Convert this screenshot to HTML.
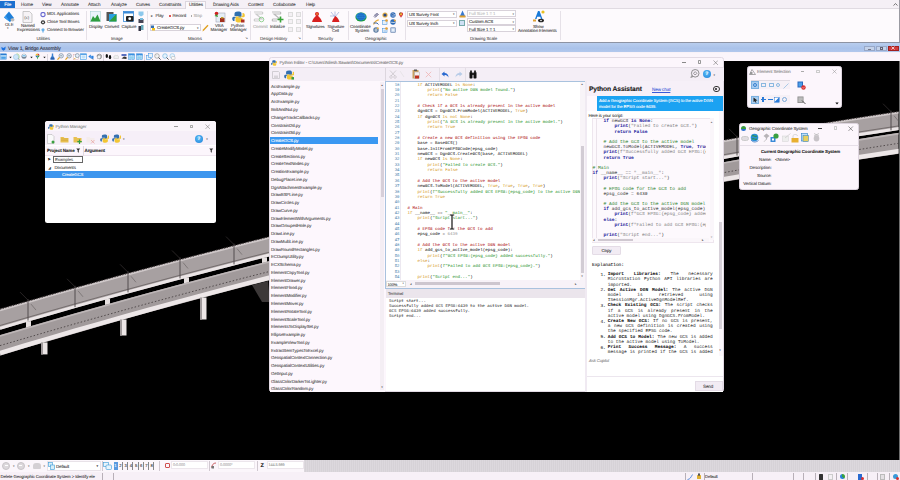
<!DOCTYPE html>
<html><head><meta charset="utf-8">
<style>
*{box-sizing:border-box;margin:0;padding:0}
html,body{width:900px;height:480px;overflow:hidden;background:#f8f2f8}
body{position:relative;font-family:"Liberation Sans",sans-serif;color:#222;text-rendering:geometricPrecision}
.a{position:absolute}
.t{position:absolute;white-space:nowrap;line-height:1;letter-spacing:-0.1px;-webkit-text-stroke:0.08px currentColor}
.m{-webkit-text-stroke:0.04px currentColor;letter-spacing:0}
.m{font-family:"Liberation Mono",monospace}
</style></head><body>

<div class="a" style="left:0px;top:0px;width:900px;height:8.5px;background:#f5f0f6;"></div>
<div class="a" style="left:0px;top:8.3px;width:900px;height:0.5px;background:#e0dbe2;"></div>
<div class="a" style="left:0px;top:1px;width:15px;height:7.3px;background:#1b6fcf;"></div>
<div class="t" style="left:4.2px;top:3.10px;font-size:4.6px;height:4.6px;color:#fff;font-weight:normal;">File</div>
<div class="a" style="left:185px;top:0.8px;width:21px;height:8px;background:#fcf9fc;border:0.5px solid #dcd6de;border-bottom:none"></div>
<div class="t" style="left:21px;top:3.20px;font-size:4.6px;height:4.6px;color:#3a3a3a;font-weight:normal;">Home</div>
<div class="t" style="left:42px;top:3.20px;font-size:4.6px;height:4.6px;color:#3a3a3a;font-weight:normal;">View</div>
<div class="t" style="left:61px;top:3.20px;font-size:4.6px;height:4.6px;color:#3a3a3a;font-weight:normal;">Annotate</div>
<div class="t" style="left:88px;top:3.20px;font-size:4.6px;height:4.6px;color:#3a3a3a;font-weight:normal;">Attach</div>
<div class="t" style="left:111px;top:3.20px;font-size:4.6px;height:4.6px;color:#3a3a3a;font-weight:normal;">Analyze</div>
<div class="t" style="left:136px;top:3.20px;font-size:4.6px;height:4.6px;color:#3a3a3a;font-weight:normal;">Curves</div>
<div class="t" style="left:159px;top:3.20px;font-size:4.6px;height:4.6px;color:#3a3a3a;font-weight:normal;">Constraints</div>
<div class="t" style="left:189px;top:3.20px;font-size:4.6px;height:4.6px;color:#3a3a3a;font-weight:normal;">Utilities</div>
<div class="t" style="left:213px;top:3.20px;font-size:4.6px;height:4.6px;color:#3a3a3a;font-weight:normal;">Drawing Aids</div>
<div class="t" style="left:248px;top:3.20px;font-size:4.6px;height:4.6px;color:#3a3a3a;font-weight:normal;">Content</div>
<div class="t" style="left:273px;top:3.20px;font-size:4.6px;height:4.6px;color:#3a3a3a;font-weight:normal;">Collaborate</div>
<div class="t" style="left:306px;top:3.20px;font-size:4.6px;height:4.6px;color:#3a3a3a;font-weight:normal;">Help</div>
<svg class="a" style="left:893px;top:3px" width="5" height="3" viewBox="0 0 5 3"><path d="M0.5,2.5 L2.5,0.6 4.5,2.5" fill="none" stroke="#555" stroke-width="0.8"/></svg>
<div class="a" style="left:0px;top:8.8px;width:900px;height:32.8px;background:#fdfafd;"></div>
<div class="a" style="left:0px;top:41.5px;width:900px;height:1.1px;background:#8d93a3;"></div>
<div class="a" style="left:898.8px;top:0px;width:1.2px;height:41.5px;background:#9a9aa2;"></div>
<div class="a" style="left:86px;top:11px;width:0.6px;height:29px;background:#e6e1e8;"></div>
<div class="a" style="left:147px;top:11px;width:0.6px;height:29px;background:#e6e1e8;"></div>
<div class="a" style="left:250px;top:11px;width:0.6px;height:29px;background:#e6e1e8;"></div>
<div class="a" style="left:302px;top:11px;width:0.6px;height:29px;background:#e6e1e8;"></div>
<div class="a" style="left:347.5px;top:11px;width:0.6px;height:29px;background:#e6e1e8;"></div>
<div class="a" style="left:404.5px;top:11px;width:0.6px;height:29px;background:#e6e1e8;"></div>
<div class="t" style="left:36.5px;top:36.80px;font-size:4.4px;height:4.4px;color:#555;font-weight:normal;">Utilities</div>
<div class="t" style="left:111px;top:36.80px;font-size:4.4px;height:4.4px;color:#555;font-weight:normal;">Image</div>
<div class="t" style="left:188px;top:36.80px;font-size:4.4px;height:4.4px;color:#555;font-weight:normal;">Macros</div>
<div class="t" style="left:260px;top:36.80px;font-size:4.4px;height:4.4px;color:#555;font-weight:normal;">Design History</div>
<div class="t" style="left:318px;top:36.80px;font-size:4.4px;height:4.4px;color:#555;font-weight:normal;">Security</div>
<div class="t" style="left:365px;top:36.80px;font-size:4.4px;height:4.4px;color:#555;font-weight:normal;">Geographic</div>
<div class="t" style="left:470px;top:36.80px;font-size:4.4px;height:4.4px;color:#555;font-weight:normal;">Drawing Scale</div>
<div class="t" style="left:245px;top:37.15px;font-size:3.5px;height:3.5px;color:#777;font-weight:normal;">↘</div>
<div class="t" style="left:298px;top:37.15px;font-size:3.5px;height:3.5px;color:#777;font-weight:normal;">↘</div>
<svg class="a" style="left:3px;top:10.5px" width="12" height="12" viewBox="0 0 12 12"><polygon points="6,0.5 11,7 7,11 1,6.5" fill="#1f7fd8"/><polygon points="6,0.5 3,5 7,11 1,6.5" fill="#3d9df0"/><ellipse cx="9.5" cy="8.8" rx="2" ry="1.6" fill="#bbb"/></svg>
<div class="t" style="left:5px;top:23.00px;font-size:4.4px;height:4.4px;color:#444;font-weight:normal;">OLE</div>
<div class="t" style="left:7px;top:27.00px;font-size:3px;height:3px;color:#555;font-weight:normal;">▾</div>
<svg class="a" style="left:22px;top:10.5px" width="11" height="12" viewBox="0 0 11 12"><path d="M1,0.5 H7.5 L10,3 V11.5 H1 Z" fill="#f6f3f6" stroke="#aaa" stroke-width="0.6"/><text x="2.2" y="8" font-size="4.2" fill="#555" font-family="Liberation Sans">(x)</text></svg>
<div class="t" style="left:21px;top:24.30px;font-size:4.4px;height:4.4px;color:#444;font-weight:normal;">Named</div>
<div class="t" style="left:17px;top:28.30px;font-size:4.4px;height:4.4px;color:#444;font-weight:normal;">Expressions</div>
<svg class="a" style="left:40px;top:11.5px" width="6" height="21" viewBox="0 0 6 21"><circle cx="3" cy="2.5" r="2.1" fill="none" stroke="#6a6ad0" stroke-width="1.1"/><circle cx="3" cy="10.3" r="2.1" fill="#333"/><circle cx="3" cy="10.3" r="0.9" fill="#fff"/><circle cx="3" cy="17.8" r="1.6" fill="#6ab0e8"/><rect x="2.5" y="18.5" width="1" height="2.2" fill="#6ab0e8"/></svg>
<div class="t" style="left:47px;top:12.40px;font-size:4.4px;height:4.4px;color:#444;font-weight:normal;">MDL Applications</div>
<div class="t" style="left:47px;top:19.90px;font-size:4.4px;height:4.4px;color:#444;font-weight:normal;">Close Tool Boxes</div>
<div class="t" style="left:47px;top:27.70px;font-size:4.4px;height:4.4px;color:#444;font-weight:normal;">Connect to Browser</div>
<svg class="a" style="left:90px;top:11px" width="11" height="11" viewBox="0 0 11 11"><rect x="0.5" y="0.5" width="10" height="10" fill="#eaf4fb" stroke="#9cc" stroke-width="0.5"/><path d="M0.5,10.5 L3,5 5,7.5 7.5,3.5 10.5,10.5Z" fill="#2e9e3e"/></svg>
<div class="t" style="left:89px;top:24.80px;font-size:4.4px;height:4.4px;color:#444;font-weight:normal;">Display</div>
<svg class="a" style="left:106px;top:11px" width="11" height="11" viewBox="0 0 11 11"><rect x="0.5" y="1" width="7" height="9" fill="#555"/><rect x="3" y="3" width="7.5" height="7.5" fill="#2aa0e0"/><path d="M3,10.5 L10.5,3 V10.5Z" fill="#2e9e3e"/></svg>
<div class="t" style="left:104.5px;top:24.80px;font-size:4.4px;height:4.4px;color:#444;font-weight:normal;">Convert</div>
<svg class="a" style="left:123px;top:11px" width="11" height="11" viewBox="0 0 11 11"><rect x="0.5" y="0.5" width="10" height="10" fill="#fff" stroke="#3a8ad8" stroke-width="0.8"/><rect x="0.5" y="0.5" width="10" height="2" fill="#3a8ad8"/><rect x="3" y="5" width="7.5" height="5.5" rx="1" fill="#222"/><circle cx="6.7" cy="7.7" r="1.4" fill="#fff"/></svg>
<div class="t" style="left:121.5px;top:24.80px;font-size:4.4px;height:4.4px;color:#444;font-weight:normal;">Capture</div>
<svg class="a" style="left:138px;top:11px" width="6" height="21" viewBox="0 0 6 21"><path d="M0.5,0.5 H5.5 V4 L3,5.5 0.5,4Z" fill="#8cc8ec"/><rect x="0.5" y="8" width="5" height="4" fill="#445"/><rect x="2" y="7" width="3" height="2" fill="#7bd"/><rect x="0.5" y="15" width="2.5" height="5" fill="#334"/><rect x="3" y="14" width="2.5" height="5" fill="#6ab"/></svg>
<div class="t" style="left:151px;top:14.95px;font-size:3.5px;height:3.5px;color:#444;font-weight:normal;">▸</div>
<div class="t" style="left:155.5px;top:14.40px;font-size:4.4px;height:4.4px;color:#444;font-weight:normal;">Play</div>
<div class="a" style="left:168.5px;top:14.8px;width:2.2px;height:2.2px;border-radius:50%;background:#d02020"></div>
<div class="t" style="left:172.5px;top:14.40px;font-size:4.4px;height:4.4px;color:#444;font-weight:normal;">Record</div>
<div class="a" style="left:190.5px;top:15px;width:1.8px;height:1.8px;background:#aaa;"></div>
<div class="t" style="left:193.5px;top:14.40px;font-size:4.4px;height:4.4px;color:#aaa;font-weight:normal;">Stop</div>
<div class="a" style="left:149.5px;top:24.2px;width:51px;height:7.3px;background:#fff;border:0.5px solid #d8d2da"></div>
<svg class="a" style="left:150px;top:25px" width="6" height="6" viewBox="0 0 6 6"><path d="M1,0.5 h3 v2.5 h-3z" fill="#3470b0"/><path d="M2,3 h3 v2.5 h-3z" fill="#f0c020"/></svg>
<div class="t" style="left:157px;top:26.40px;font-size:4.4px;height:4.4px;color:#333;font-weight:normal;">CreateGCS.py</div>
<div class="t" style="left:197px;top:27.00px;font-size:3px;height:3px;color:#444;font-weight:normal;">▾</div>
<svg class="a" style="left:202px;top:23.5px" width="7" height="8" viewBox="0 0 7 8"><path d="M0.5,7.5 L1,5.5 5.5,0.8 6.5,1.8 2,6.5Z" fill="#e0a020"/></svg>
<svg class="a" style="left:214px;top:10.5px" width="12" height="12" viewBox="0 0 12 12"><rect x="2" y="2" width="9" height="9" fill="#e6eef6" stroke="#99a" stroke-width="0.5"/><circle cx="2.5" cy="2.5" r="1.8" fill="#d02020"/><path d="M0.5,5 L3,3 4,6Z" fill="#3a9a30"/><rect x="6" y="7" width="4.5" height="4" fill="#a03020"/><rect x="7" y="6" width="2.5" height="1.5" fill="#c0a030"/></svg>
<div class="t" style="left:215px;top:24.30px;font-size:4.4px;height:4.4px;color:#444;font-weight:normal;">VBA</div>
<div class="t" style="left:210.5px;top:28.30px;font-size:4.4px;height:4.4px;color:#444;font-weight:normal;">Manager</div>
<svg class="a" style="left:232px;top:11px" width="13" height="12" viewBox="0 0 13 12"><path d="M6,0.5 C3,0.5 2.5,1.5 2.5,3 V5 H6.5 V5.7 H1.5 C0,5.7 0,8 0.5,9 1,10 1.5,10 2.5,10 V8 C2.5,7 3.5,6.5 4.5,6.5 H8 C9,6.5 9.5,6 9.5,5 V2.5 C9.5,1 8,0.5 6,0.5Z" fill="#2f6fb0"/><path d="M7,11.5 C10,11.5 10.5,10.5 10.5,9 V7 H6.5 V6.3 H11.5 C13,6.3 13,4 12.5,3 12,2 11.5,2 10.5,2 V4 C10.5,5 9.5,5.5 8.5,5.5 H5 C4,5.5 3.5,6 3.5,7 V9.5 C3.5,11 5,11.5 7,11.5Z" fill="#f2c634"/><rect x="9" y="8.5" width="3.5" height="3" fill="#b03020"/></svg>
<div class="t" style="left:231px;top:24.30px;font-size:4.4px;height:4.4px;color:#444;font-weight:normal;">Python</div>
<div class="t" style="left:230px;top:28.30px;font-size:4.4px;height:4.4px;color:#444;font-weight:normal;">Manager</div>
<svg class="a" style="left:253px;top:11px" width="12" height="12" viewBox="0 0 12 12"><path d="M1,1 H9 C10,1 10,3 9,3 H3 L9,8 H2 C1,8 1,10 2,10 H6" fill="none" stroke="#ccc" stroke-width="1.2"/><circle cx="8.5" cy="8.5" r="2.3" fill="none" stroke="#8c8" stroke-width="0.9"/></svg>
<div class="t" style="left:253px;top:24.80px;font-size:4.4px;height:4.4px;color:#aaa;font-weight:normal;">Commit</div>
<svg class="a" style="left:271px;top:11px" width="13" height="12" viewBox="0 0 13 12"><path d="M1,1 H9 C10,1 10,3 9,3 H3 L9,8 H2 C1,8 1,10 2,10 H6" fill="none" stroke="#bbb" stroke-width="1.2"/><path d="M9.5,5.5 V11.5 M6.5,8.5 H12.5" stroke="#3aa43a" stroke-width="1.6"/></svg>
<div class="t" style="left:270px;top:24.80px;font-size:4.4px;height:4.4px;color:#444;font-weight:normal;">Initialize</div>
<div class="a" style="left:287.5px;top:11.5px;width:5px;height:5px;background:#f4f0f4;border:0.5px solid #ddd"></div>
<div class="a" style="left:295.5px;top:11.5px;width:5px;height:5px;background:#f4f0f4;border:0.5px solid #ddd"></div>
<div class="a" style="left:287.5px;top:19px;width:5px;height:5px;background:#f4f0f4;border:0.5px solid #ddd"></div>
<div class="a" style="left:295.5px;top:19px;width:5px;height:5px;background:#f4f0f4;border:0.5px solid #ddd"></div>
<div class="a" style="left:287.5px;top:26.5px;width:5px;height:5px;background:#f4f0f4;border:0.5px solid #ddd"></div>
<div class="a" style="left:295.5px;top:26.5px;width:5px;height:5px;background:#f4f0f4;border:0.5px solid #ddd"></div>
<svg class="a" style="left:311px;top:10.5px" width="12" height="12" viewBox="0 0 12 12"><circle cx="6" cy="3" r="2" fill="#d82020"/><path d="M6,4 C3,6 1.5,9 1,11 H11 C10.5,9 9,6 6,4Z" fill="#d82020"/><circle cx="6" cy="3" r="0.8" fill="#f4c030"/></svg>
<div class="t" style="left:306px;top:24.95px;font-size:4.1px;height:4.1px;color:#444;font-weight:normal;">Signatures</div>
<svg class="a" style="left:329px;top:10.5px" width="11" height="12" viewBox="0 0 11 12"><path d="M2,1 L6,6 M6,0.5 V6 M10,1 L6,6 M1,5 H6" stroke="#9ad" stroke-width="0.7"/><path d="M6.5,5 C4.5,7 3.5,9 3,11 H10.5 C10,9 9,7 6.5,5Z" fill="#d82020"/></svg>
<div class="t" style="left:327.5px;top:24.95px;font-size:4.1px;height:4.1px;color:#444;font-weight:normal;">Signature</div>
<div class="t" style="left:332px;top:28.60px;font-size:4.2px;height:4.2px;color:#444;font-weight:normal;">Cell</div>
<svg class="a" style="left:355px;top:11.5px" width="12" height="10" viewBox="0 0 12 10"><ellipse cx="6" cy="5" rx="5.6" ry="4.6" fill="#1a9e3a"/><ellipse cx="6" cy="4.6" rx="5" ry="3.8" fill="#2a8ae0"/><path d="M1.5,4.6 H10.5 M6,1 V8.5 M2.2,2.8 H9.8 M2.2,6.5 H9.8" stroke="#1a60b0" stroke-width="0.5"/><ellipse cx="6" cy="4.6" rx="2.3" ry="3.8" fill="none" stroke="#1a60b0" stroke-width="0.5"/></svg>
<div class="t" style="left:350px;top:24.80px;font-size:4.4px;height:4.4px;color:#444;font-weight:normal;">Coordinate</div>
<div class="t" style="left:355px;top:28.50px;font-size:4.4px;height:4.4px;color:#444;font-weight:normal;">System</div>
<svg class="a" style="left:373px;top:11.5px" width="6" height="6" viewBox="0 0 6 6"><path d="M1,4.5 L4.5,1 M2,5.5 L5.5,2" stroke="#3a3a6a" stroke-width="1"/><path d="M1.5,3 L3,1.5" stroke="#88a" stroke-width="0.6"/></svg>
<svg class="a" style="left:381.5px;top:11.5px" width="6" height="6" viewBox="0 0 6 6"><circle cx="3" cy="3" r="2.6" fill="#e8b040"/><circle cx="3" cy="3" r="1.6" fill="#2a4a8a"/></svg>
<svg class="a" style="left:389.5px;top:11.5px" width="6" height="6" viewBox="0 0 6 6"><circle cx="3" cy="3" r="2.7" fill="#2a6ab8"/><path d="M1.5,2 C3,1 4,3 5.5,2.5 M1.5,4 H5" stroke="#dde" stroke-width="0.7"/></svg>
<svg class="a" style="left:397.5px;top:11.5px" width="6" height="6" viewBox="0 0 6 6"><path d="M3,5.8 L1,2.8 C0.5,1 2,0.3 3,0.3 4,0.3 5.5,1 5,2.8Z" fill="#d84040"/><circle cx="3" cy="2.3" r="1" fill="#f0c030"/><path d="M1,2 L3,0.5" stroke="#3a9a40" stroke-width="0.6"/></svg>
<svg class="a" style="left:373px;top:19px" width="6" height="6" viewBox="0 0 6 6"><path d="M0.5,5.5 C2,2 4,1 5.8,0.8" stroke="#e8b040" stroke-width="1.2" fill="none"/><path d="M0.5,4 L4,4 5.5,5.5" stroke="#2a5aa0" stroke-width="0.9" fill="none"/></svg>
<svg class="a" style="left:381.5px;top:19px" width="6" height="6" viewBox="0 0 6 6"><rect x="0.5" y="1.5" width="4.5" height="4.2" fill="#e4f0fa" stroke="#3a8ad8" stroke-width="0.5"/><circle cx="4.5" cy="1.5" r="1.3" fill="#e8a030"/></svg>
<svg class="a" style="left:389.5px;top:19px" width="6" height="6" viewBox="0 0 6 6"><circle cx="3" cy="3" r="2.7" fill="#2a6ab8"/><path d="M0.8,3.5 C2,2.5 4,4.5 5.5,3" stroke="#f0f0f0" stroke-width="0.8" fill="none"/><circle cx="4.8" cy="1.5" r="1" fill="#e8a030"/></svg>
<svg class="a" style="left:373px;top:26.5px" width="6" height="6" viewBox="0 0 6 6"><circle cx="3" cy="3" r="2.7" fill="#5a7aa0"/><circle cx="3" cy="3" r="1.6" fill="#dfe8f0"/><path d="M1,3 H5" stroke="#3a5a80" stroke-width="0.6"/><circle cx="4.8" cy="1.2" r="1" fill="#e8b040"/></svg>
<svg class="a" style="left:381.5px;top:26.5px" width="6" height="6" viewBox="0 0 6 6"><rect x="0.5" y="1.5" width="4.5" height="4.2" fill="#e4f0fa" stroke="#3a8ad8" stroke-width="0.5"/><circle cx="4.5" cy="1.5" r="1.3" fill="#e8a030"/><path d="M1.5,4 H4" stroke="#3a8ad8" stroke-width="0.5"/></svg>
<svg class="a" style="left:389.5px;top:26.5px" width="6" height="6" viewBox="0 0 6 6"><rect x="0.8" y="0.8" width="4.6" height="4.6" fill="#b8cce8" stroke="#4a6a98" stroke-width="0.5"/><rect x="1.8" y="1.8" width="2.6" height="2.6" fill="#e8f0f8"/></svg>
<div class="a" style="left:407px;top:10.5px;width:49.5px;height:7px;background:#fff;border:0.5px solid #d8d2da"></div>
<div class="t" style="left:409px;top:12.60px;font-size:4.4px;height:4.4px;color:#333;font-weight:normal;">US Survey Foot</div>
<div class="t" style="left:453px;top:13.20px;font-size:3px;height:3px;color:#555;font-weight:normal;">▾</div>
<div class="a" style="left:407px;top:19.5px;width:49.5px;height:7px;background:#fff;border:0.5px solid #d8d2da"></div>
<div class="t" style="left:409px;top:21.60px;font-size:4.4px;height:4.4px;color:#333;font-weight:normal;">US Survey Inch</div>
<div class="t" style="left:453px;top:22.20px;font-size:3px;height:3px;color:#555;font-weight:normal;">▾</div>
<svg class="a" style="left:458.5px;top:10px" width="7" height="8" viewBox="0 0 7 8"><path d="M3.5,0.5 L6.5,7 H0.5Z" fill="#3a7ad0"/><rect x="0.5" y="5.5" width="6" height="2" fill="#e0a030"/></svg>
<div class="a" style="left:458.5px;top:19.5px;width:6.5px;height:6.5px;background:#cfe0f4;border:0.5px solid #7aa"></div>
<div class="a" style="left:466.5px;top:10px;width:49px;height:7.2px;background:#fff;border:0.5px solid #d8d2da"></div>
<div class="t" style="left:469px;top:12.20px;font-size:4.4px;height:4.4px;color:#bbb;font-weight:normal;">Full Size 1 = 1</div>
<div class="t" style="left:512.5px;top:12.80px;font-size:3px;height:3px;color:#666;font-weight:normal;">▾</div>
<div class="a" style="left:466.5px;top:17.7px;width:49px;height:7.2px;background:#fff;border:0.5px solid #d8d2da"></div>
<div class="t" style="left:469px;top:19.90px;font-size:4.4px;height:4.4px;color:#333;font-weight:normal;">Custom ACS</div>
<div class="t" style="left:512.5px;top:20.50px;font-size:3px;height:3px;color:#666;font-weight:normal;">▾</div>
<div class="a" style="left:466.5px;top:25.3px;width:49px;height:7.2px;background:#fff;border:0.5px solid #d8d2da"></div>
<div class="t" style="left:469px;top:27.50px;font-size:4.4px;height:4.4px;color:#333;font-weight:normal;">Full Size 1 = 1</div>
<div class="t" style="left:512.5px;top:28.10px;font-size:3px;height:3px;color:#666;font-weight:normal;">▾</div>
<svg class="a" style="left:532px;top:10px" width="14" height="13" viewBox="0 0 14 13"><path d="M3,9 L6,1 H7.5 L10.5,9 H9 L8.2,6.8 H5.2 L4.5,9Z" fill="#1a7ad8"/><circle cx="11" cy="2" r="1.6" fill="#e8c020"/><ellipse cx="9" cy="10.5" rx="3" ry="1.8" fill="#222"/><circle cx="9" cy="10.5" r="0.8" fill="#fff"/><rect x="1" y="9.5" width="3" height="2" fill="#e0a030"/></svg>
<div class="t" style="left:533px;top:24.80px;font-size:4.4px;height:4.4px;color:#444;font-weight:normal;">Show</div>
<div class="t" style="left:518px;top:28.50px;font-size:4.4px;height:4.4px;color:#444;font-weight:normal;">Annotation Elements</div>
<div class="a" style="left:560px;top:11px;width:0.6px;height:29px;background:#e6e1e8;"></div>
<div class="a" style="left:0;top:42.6px;width:900px;height:9.9px;background:linear-gradient(#b8cdee,#aac2ea 60%,#b2c8ec)"></div>
<svg class="a" style="left:0.5px;top:46px" width="5" height="5" viewBox="0 0 5 5"><path d="M0.3,1 L2.5,2 4.7,0.5 4.2,3.5 2.5,4.7 0.8,3.5Z" fill="#1a70e0"/></svg>
<div class="t" style="left:8px;top:46.50px;font-size:5px;height:5px;color:#2a2a3a;font-weight:normal;">View 1, Bridge Assembly</div>
<div class="a" style="left:864px;top:45.6px;width:10.5px;height:5.2px;background:#c4d2ea;border:0.5px solid #98a8c8"></div>
<div class="a" style="left:876px;top:45.6px;width:10.5px;height:5.2px;background:#c4d2ea;border:0.5px solid #98a8c8"></div>
<div class="a" style="left:888px;top:45.6px;width:10.5px;height:5.2px;background:#d23a3a;border:0.5px solid #a02020"></div>
<div class="a" style="left:867.5px;top:48.6px;width:3.5px;height:0.5px;background:#778;"></div>
<div class="a" style="left:879.7px;top:47.1px;width:3px;height:2.5px;background:none;border:0.5px solid #667"></div>
<svg class="a" style="left:891.2px;top:46.2px" width="4.0" height="4.0" viewBox="0 0 4.0 4.0"><path d="M0.5,0.5 L3.5,3.5 M3.5,0.5 L0.5,3.5" stroke="#fff" stroke-width="0.7"/></svg>
<div class="a" style="left:0px;top:52.5px;width:900px;height:8.5px;background:#fbf5fb;"></div>
<svg class="a" style="left:0px;top:53.3px" width="7" height="7" viewBox="0 0 7 7"><rect x="0.5" y="0.8" width="6" height="5.6" fill="#a8d4f4" stroke="#4a90d8" stroke-width="0.4"/><rect x="0.5" y="0.8" width="6" height="1.2" fill="#2a7ad0"/><rect x="1.3" y="3.8" width="4.4" height="2" fill="#4aa0e8"/></svg>
<svg class="a" style="left:9px;top:55.8px" width="3" height="3" viewBox="0 0 3 3"><path d="M0.3,0.8 H2.7 L1.5,2.3Z" fill="#111"/></svg>
<svg class="a" style="left:30px;top:55.8px" width="3" height="3" viewBox="0 0 3 3"><path d="M0.3,0.8 H2.7 L1.5,2.3Z" fill="#111"/></svg>
<svg class="a" style="left:43px;top:55.8px" width="3" height="3" viewBox="0 0 3 3"><path d="M0.3,0.8 H2.7 L1.5,2.3Z" fill="#111"/></svg>
<svg class="a" style="left:13px;top:53.3px" width="7" height="7" viewBox="0 0 7 7"><circle cx="3" cy="4" r="2.6" fill="#cfe6f8" stroke="#8cc0e8" stroke-width="0.5"/><path d="M3.5,0.8 C6,0.5 6.5,3 6,5.5" stroke="#8ccc60" stroke-width="0.6" fill="none"/><path d="M5.3,5.8 L6.5,6.8" stroke="#222" stroke-width="0.6"/></svg>
<svg class="a" style="left:21px;top:53.3px" width="6" height="7" viewBox="0 0 6 7"><circle cx="3" cy="3.3" r="2.5" fill="#7a8898"/><ellipse cx="3" cy="2.6" rx="2" ry="1.5" fill="#e8f4fc"/><rect x="1.5" y="2.3" width="3" height="1" fill="#5aaee8"/></svg>
<svg class="a" style="left:35px;top:53.3px" width="5" height="7" viewBox="0 0 5 7"><path d="M2.5,0.5 A2,2 0 0 1 4.5,2.5 L2.5,2.5Z" fill="#e03030"/><path d="M4.5,2.5 A2,2 0 0 1 2.5,4.5 L2.5,2.5Z" fill="#30a040"/><path d="M2.5,4.5 A2,2 0 0 1 0.5,2.5 L2.5,2.5Z" fill="#2a70d0"/><path d="M0.5,2.5 A2,2 0 0 1 2.5,0.5 L2.5,2.5Z" fill="#f0c020"/><path d="M1.8,4.3 L2.5,6.5 3.2,4.3Z" fill="#30a040"/></svg>
<div class="a" style="left:46.7px;top:53.5px;width:0.7px;height:7px;background:#dcd6de;"></div>
<svg class="a" style="left:50px;top:53.3px" width="5" height="7" viewBox="0 0 5 7"><path d="M1.8,0.5 H3.2 V2.5 L4.7,6.5 H0.3 L1.8,2.5Z" fill="#3a80d0"/><rect x="0.6" y="4.5" width="3.8" height="2" fill="#2a60b0"/></svg>
<svg class="a" style="left:57px;top:53.3px" width="7" height="7" viewBox="0 0 7 7"><circle cx="4.2" cy="2.8" r="2.2" fill="#e4eef8" stroke="#6a7a90" stroke-width="0.6"/><path d="M2.6,4.4 L0.5,6.6" stroke="#e0a020" stroke-width="1.2"/><path d="M3.2,2.8 H5.2" stroke="#345" stroke-width="0.5"/></svg>
<svg class="a" style="left:65px;top:53.3px" width="7" height="7" viewBox="0 0 7 7"><circle cx="4.2" cy="2.8" r="2.2" fill="#e4eef8" stroke="#6a7a90" stroke-width="0.6"/><path d="M2.6,4.4 L0.5,6.6" stroke="#e0a020" stroke-width="1.2"/><path d="M3.2,2.8 H5.2" stroke="#345" stroke-width="0.5"/></svg>
<svg class="a" style="left:72.5px;top:53.3px" width="7" height="7" viewBox="0 0 7 7"><rect x="0.5" y="1.5" width="5" height="5" fill="#fff" stroke="#d8a0a0" stroke-width="0.4"/><circle cx="4.3" cy="2.6" r="2" fill="#e4eef8" stroke="#6a7a90" stroke-width="0.6"/><path d="M1,6.3 L2.5,4.8" stroke="#e0a020" stroke-width="0.9"/></svg>
<svg class="a" style="left:80px;top:53.3px" width="7" height="7" viewBox="0 0 7 7"><rect x="0.5" y="0.8" width="6" height="5.8" fill="#e8f4fc" stroke="#4aa0e8" stroke-width="0.6"/><rect x="0.5" y="0.8" width="6" height="1" fill="#3a90e0"/><ellipse cx="3.5" cy="4" rx="2" ry="1.4" fill="#bfe0f8"/></svg>
<svg class="a" style="left:88px;top:53.3px" width="6" height="7" viewBox="0 0 6 7"><path d="M0.3,3.5 L2.8,1.5 V5.5Z" fill="#2a80e0"/><rect x="3.2" y="2.8" width="2.3" height="3" fill="#2a80e0"/><path d="M4.5,6 L5.5,6.8" stroke="#222" stroke-width="0.6"/></svg>
<svg class="a" style="left:96px;top:53.3px" width="6" height="7" viewBox="0 0 6 7"><path d="M1,3.5 A2.3,2.3 0 1 1 3,5.8" fill="none" stroke="#666" stroke-width="0.7"/><rect x="1.8" y="2.5" width="2.6" height="3.3" fill="#f0f0f0" stroke="#777" stroke-width="0.4"/></svg>
<div class="a" style="left:103.3px;top:53.5px;width:0.7px;height:7px;background:#dcd6de;"></div>
<svg class="a" style="left:105px;top:53.3px" width="7" height="7" viewBox="0 0 7 7"><ellipse cx="1.8" cy="3" rx="1.2" ry="2.1" fill="#111"/><ellipse cx="5" cy="4.2" rx="1.2" ry="2.1" fill="#111"/></svg>
<svg class="a" style="left:113px;top:53.3px" width="6" height="7" viewBox="0 0 6 7"><path d="M0.8,5.5 C0.3,3 2,1.8 3.5,2.5 C4.5,1.5 6,3 5.5,5.5Z" fill="#eee" stroke="#c8c8c8" stroke-width="0.5"/></svg>
<svg class="a" style="left:121px;top:53.3px" width="6" height="7" viewBox="0 0 6 7"><rect x="0.5" y="1" width="5" height="2" fill="#5a70c0"/><path d="M0.5,5.5 L3,3.5 5.5,4 5.5,6Z" fill="#333"/></svg>
<svg class="a" style="left:128px;top:53.3px" width="7" height="7" viewBox="0 0 7 7"><rect x="0.5" y="0.8" width="6" height="5.8" fill="#cfe8f8" stroke="#3a90e0" stroke-width="0.5"/><rect x="0.5" y="0.8" width="6" height="1.6" fill="#3a90e0"/><path d="M3.5,2.4 V6.6" stroke="#fff" stroke-width="0.5"/><rect x="1.2" y="3.3" width="4.6" height="2.6" fill="#8fd0f0"/></svg>
<svg class="a" style="left:136px;top:53.3px" width="7" height="7" viewBox="0 0 7 7"><rect x="0.5" y="0.8" width="6" height="5.8" fill="#cfe8f8" stroke="#3a90e0" stroke-width="0.5"/><rect x="0.5" y="0.8" width="6" height="1.6" fill="#3a90e0"/><path d="M3.5,2.4 V6.6" stroke="#fff" stroke-width="0.5"/><rect x="1.2" y="3.3" width="4.6" height="2.6" fill="#8fd0f0"/></svg>
<div class="a" style="left:144.3px;top:53.5px;width:0.7px;height:7px;background:#dcd6de;"></div>
<svg class="a" style="left:146px;top:53.3px" width="7" height="7" viewBox="0 0 7 7"><rect x="0.5" y="2.5" width="4" height="4" fill="#e4f2fc" stroke="#3a90e0" stroke-width="0.5"/><rect x="2.5" y="0.6" width="4" height="4" fill="#e4f2fc" stroke="#3a90e0" stroke-width="0.5"/><path d="M5.5,5.5 L6.6,6.6" stroke="#222" stroke-width="0.6"/></svg>
<svg class="a" style="left:154px;top:53.3px" width="7" height="7" viewBox="0 0 7 7"><circle cx="3" cy="3" r="2.3" fill="#f4f4f4" stroke="#888" stroke-width="0.6"/><path d="M4.5,4.5 L6.6,6.6" stroke="#333" stroke-width="0.8"/><path d="M1,1 L2.5,2.5" stroke="#aaa" stroke-width="0.5"/></svg>
<svg class="a" style="left:161.5px;top:53.3px" width="7" height="7" viewBox="0 0 7 7"><circle cx="3" cy="3" r="2.3" fill="#e4f2fc" stroke="#6ab0e0" stroke-width="0.6"/><path d="M4.5,4.5 L6.6,6.6" stroke="#333" stroke-width="0.8"/></svg>
<svg class="a" style="left:169px;top:53.3px" width="7" height="7" viewBox="0 0 7 7"><circle cx="3.3" cy="3" r="2.4" fill="#e8f4fc" stroke="#8cc0e8" stroke-width="0.6"/><rect x="2.5" y="3.5" width="3.5" height="3" rx="0.8" fill="#f8f8f8" stroke="#999" stroke-width="0.4"/></svg>
<div class="a" style="left:0px;top:61px;width:900px;height:398.5px;background:#000;"></div>
<svg class="a" style="left:0;top:0" width="900" height="480" viewBox="0 0 900 480"><defs><clipPath id="vc"><rect x="0" y="61" width="898.5" height="398.5"/></clipPath></defs><g clip-path="url(#vc)"><rect x="26" y="321.1" width="5" height="7.4" fill="#e6e0e0"/><rect x="105" y="298.8" width="5" height="7.1" fill="#e6e0e0"/><rect x="184" y="277.4" width="5" height="6.9" fill="#e6e0e0"/><rect x="262" y="257.3" width="5" height="6.6" fill="#e6e0e0"/><polygon fill="#a7a0a1" points="0,309.1 25,301.9 50,294.8 75,287.8 100,280.9 125,274.1 150,267.4 175,260.8 200,254.3 225,247.9 250,241.5 275,235.3 300,229.2 325,223.2 350,217.2 375,211.4 400,205.7 425,200.0 450,194.5 475,189.0 500,183.7 525,178.4 550,173.3 575,168.2 600,163.3 625,158.4 650,153.7 675,149.0 700,144.4 725,139.9 750,135.6 775,131.3 800,127.1 825,123.0 850,119.0 875,115.1 900,111.3 900,129.9 875,133.7 850,137.6 825,141.6 800,145.7 775,150.0 750,154.3 725,158.7 700,163.2 675,167.8 650,172.5 625,177.3 600,182.2 575,187.2 550,192.3 525,197.5 500,202.8 475,208.2 450,213.7 425,219.3 400,225.0 375,230.8 350,236.7 325,242.7 300,248.8 275,255.0 250,261.3 225,267.7 200,274.2 175,280.8 150,287.5 125,294.3 100,301.1 75,308.1 50,315.2 25,322.4 0,329.7"/><polyline fill="none" stroke="#cfc8c9" stroke-width="1.8" points="0,310.3 25,303.1 50,296.0 75,289.0 100,282.1 125,275.3 150,268.6 175,262.0 200,255.5 225,249.1 250,242.7 275,236.5 300,230.4 325,224.4 350,218.4 375,212.6 400,206.9 425,201.2 450,195.7 475,190.2 500,184.9 525,179.6 550,174.5 575,169.4 600,164.5 625,159.6 650,154.9 675,150.2 700,145.6 725,141.1 750,136.8 775,132.5 800,128.3 825,124.2 850,120.2 875,116.3 900,112.5"/><polyline fill="none" stroke="#3c3536" stroke-width="1.1" stroke-dasharray="1.3 1.4" points="0,309.1 25,301.9 50,294.8 75,287.8 100,280.9 125,274.1 150,267.4 175,260.8 200,254.3 225,247.9 250,241.5 275,235.3 300,229.2 325,223.2 350,217.2 375,211.4 400,205.7 425,200.0 450,194.5 475,189.0 500,183.7 525,178.4 550,173.3 575,168.2 600,163.3 625,158.4 650,153.7 675,149.0 700,144.4 725,139.9 750,135.6 775,131.3 800,127.1 825,123.0 850,119.0 875,115.1 900,111.3"/><polyline fill="none" stroke="#5e5758" stroke-width="0.7" points="0,325.5 25,318.2 50,311.0 75,303.9 100,296.9 125,290.1 150,283.3 175,276.6 200,270.0 225,263.5 250,257.1 275,250.8 300,244.6 325,238.5 350,232.5 375,226.6 400,220.8 425,215.1 450,209.5 475,204.0 500,198.6 525,193.3 550,188.1 575,183.0 600,178.0 625,173.1 650,168.3 675,163.6 700,159.0 725,154.5 750,150.1 775,145.8 800,141.5 825,137.4 850,133.4 875,129.5 900,125.7"/><polyline fill="none" stroke="#ebe5e6" stroke-width="3" points="0,328.2 25,320.9 50,313.7 75,306.6 100,299.6 125,292.8 150,286.0 175,279.3 200,272.7 225,266.2 250,259.8 275,253.5 300,247.3 325,241.2 350,235.2 375,229.3 400,223.5 425,217.8 450,212.2 475,206.7 500,201.3 525,196.0 550,190.8 575,185.7 600,180.7 625,175.8 650,171.0 675,166.3 700,161.7 725,157.2 750,152.8 775,148.5 800,144.2 825,140.1 850,136.1 875,132.2 900,128.4"/><polygon fill="#a19a9b" points="0,335.1 25,327.8 50,320.5 75,313.3 100,306.3 125,299.3 150,292.4 175,285.7 200,279.0 225,272.4 250,265.9 275,259.6 300,253.3 325,247.1 350,241.0 375,235.1 400,229.2 425,223.4 450,217.7 475,212.2 500,206.7 525,201.3 550,196.0 575,190.9 600,185.8 625,180.8 650,175.9 675,171.1 700,166.5 725,161.9 750,157.4 775,153.0 800,148.7 825,144.6 850,140.5 875,136.5 900,132.6 900,153.6 875,157.3 850,161.1 825,165.0 800,169.0 775,173.1 750,177.4 725,181.7 700,186.2 675,190.7 650,195.4 625,200.2 600,205.1 575,210.1 550,215.2 525,220.5 500,225.8 475,231.3 450,236.8 425,242.5 400,248.3 375,254.2 350,260.2 325,266.3 300,272.5 275,278.8 250,285.2 225,291.8 200,298.5 175,305.2 150,312.1 125,319.1 100,326.2 75,333.4 50,340.7 25,348.1 0,355.7"/><polyline fill="none" stroke="#bdb6b7" stroke-width="1.6" points="0,336.0 25,328.7 50,321.4 75,314.2 100,307.2 125,300.2 150,293.3 175,286.6 200,279.9 225,273.3 250,266.8 275,260.5 300,254.2 325,248.0 350,241.9 375,236.0 400,230.1 425,224.3 450,218.6 475,213.1 500,207.6 525,202.2 550,196.9 575,191.8 600,186.7 625,181.7 650,176.8 675,172.0 700,167.4 725,162.8 750,158.3 775,153.9 800,149.6 825,145.5 850,141.4 875,137.4 900,133.5"/><polyline fill="none" stroke="#4a4344" stroke-width="0.9" stroke-dasharray="1.5 2" points="0,345.6 25,338.3 50,331.0 75,323.8 100,316.8 125,309.8 150,302.9 175,296.2 200,289.5 225,282.9 250,276.4 275,270.1 300,263.8 325,257.6 350,251.5 375,245.6 400,239.7 425,233.9 450,228.2 475,222.7 500,217.2 525,211.8 550,206.5 575,201.4 600,196.3 625,191.3 650,186.4 675,181.6 700,177.0 725,172.4 750,167.9 775,163.5 800,159.2 825,155.1 850,151.0 875,147.0 900,143.1"/><polyline fill="none" stroke="#ede7e8" stroke-width="4.6" points="0,353.1 25,345.5 50,338.1 75,330.8 100,323.6 125,316.5 150,309.5 175,302.6 200,295.9 225,289.2 250,282.6 275,276.2 300,269.9 325,263.7 350,257.6 375,251.6 400,245.7 425,239.9 450,234.2 475,228.7 500,223.2 525,217.9 550,212.6 575,207.5 600,202.5 625,197.6 650,192.8 675,188.1 700,183.6 725,179.1 750,174.8 775,170.5 800,166.4 825,162.4 850,158.5 875,154.7 900,151.0"/><rect x="41" y="342.4" width="6.5" height="12" fill="#ece6e6"/><rect x="41" y="342.4" width="2" height="12" fill="#a09a9b"/><rect x="120" y="319.5" width="6.5" height="16" fill="#ece6e6"/><rect x="120" y="319.5" width="2" height="16" fill="#a09a9b"/><rect x="200" y="297.5" width="6.5" height="22" fill="#ece6e6"/><rect x="200" y="297.5" width="2" height="22" fill="#a09a9b"/><polygon fill="#3c3838" points="252,285 268,281 270,302 262,302"/><line x1="28" y1="299.1" x2="28" y2="320.5" stroke="#4a4445" stroke-width="0.9"/><line x1="20" y1="292.1" x2="28" y2="300.1" stroke="#3a3435" stroke-width="0.7"/><line x1="31" y1="304.1" x2="36" y2="310.1" stroke="#6e6869" stroke-width="0.7"/><line x1="75" y1="285.8" x2="75" y2="307.1" stroke="#4a4445" stroke-width="0.9"/><line x1="67" y1="278.8" x2="75" y2="286.8" stroke="#3a3435" stroke-width="0.7"/><line x1="78" y1="290.8" x2="83" y2="296.8" stroke="#6e6869" stroke-width="0.7"/><line x1="128" y1="271.3" x2="128" y2="292.4" stroke="#4a4445" stroke-width="0.9"/><line x1="120" y1="264.3" x2="128" y2="272.3" stroke="#3a3435" stroke-width="0.7"/><line x1="131" y1="276.3" x2="136" y2="282.3" stroke="#6e6869" stroke-width="0.7"/><line x1="180" y1="257.5" x2="180" y2="278.4" stroke="#4a4445" stroke-width="0.9"/><line x1="172" y1="250.5" x2="180" y2="258.5" stroke="#3a3435" stroke-width="0.7"/><line x1="183" y1="262.5" x2="188" y2="268.5" stroke="#6e6869" stroke-width="0.7"/><line x1="234" y1="243.6" x2="234" y2="264.4" stroke="#4a4445" stroke-width="0.9"/><line x1="226" y1="236.6" x2="234" y2="244.6" stroke="#3a3435" stroke-width="0.7"/><line x1="237" y1="248.6" x2="242" y2="254.6" stroke="#6e6869" stroke-width="0.7"/><line x1="737" y1="135.8" x2="737" y2="155.5" stroke="#4a4445" stroke-width="0.9"/><line x1="729" y1="128.8" x2="737" y2="136.8" stroke="#3a3435" stroke-width="0.7"/><line x1="740" y1="140.8" x2="745" y2="146.8" stroke="#6e6869" stroke-width="0.7"/><line x1="891" y1="110.7" x2="891" y2="130.3" stroke="#4a4445" stroke-width="0.9"/><line x1="883" y1="103.7" x2="891" y2="111.7" stroke="#3a3435" stroke-width="0.7"/><line x1="894" y1="115.7" x2="899" y2="121.7" stroke="#6e6869" stroke-width="0.7"/></g></svg>
<div class="a" style="left:898.5px;top:61px;width:1.5px;height:399px;background:#6e6e6e;"></div>
<div class="a" style="left:0px;top:459.5px;width:900px;height:12.5px;background:#d9d5da;"></div>
<div class="a" style="left:0;top:459.5px;width:900px;height:12.5px;background:repeating-linear-gradient(90deg,#dcd8dd 0 1px,#d6d2d7 1px 2px)"></div>
<div class="a" style="left:0px;top:459.5px;width:304px;height:12.5px;background:#fbf6fb;"></div>
<div class="a" style="left:2px;top:461.8px;width:8px;height:8px;border-radius:50%;background:#dcd8dc;border:0.6px solid #c8c4c8"></div>
<div class="a" style="left:4.5px;top:465.4px;width:3px;height:0.8px;background:#fff"></div>
<div class="a" style="left:16.5px;top:461.8px;width:8px;height:8px;border-radius:50%;background:#dcd8dc;border:0.6px solid #c8c4c8"></div>
<div class="a" style="left:19.0px;top:465.4px;width:3px;height:0.8px;background:#fff"></div>
<div class="t" style="left:13px;top:465.00px;font-size:3px;height:3px;color:#666;font-weight:normal;">▾</div>
<div class="t" style="left:28px;top:465.00px;font-size:3px;height:3px;color:#666;font-weight:normal;">▾</div>
<div class="a" style="left:32.5px;top:462.5px;width:8.5px;height:6px;border-radius:3px 3px 1px 1px;background:#d4d0d4"></div>
<div class="t" style="left:43.5px;top:465.00px;font-size:3px;height:3px;color:#666;font-weight:normal;">▾</div>
<div class="a" style="left:47px;top:461px;width:53.5px;height:9.5px;background:#fff;border:0.5px solid #e8e2e8"></div>
<svg class="a" style="left:48px;top:461.8px" width="7" height="8" viewBox="0 0 7 8"><rect x="0.5" y="0.5" width="4" height="4" fill="#d8eef8" stroke="#3a9ad8" stroke-width="0.6"/><rect x="2.5" y="3" width="4" height="4.5" fill="#d8eef8" stroke="#3a9ad8" stroke-width="0.6"/></svg>
<div class="t" style="left:56px;top:464.50px;font-size:4.4px;height:4.4px;color:#333;font-weight:normal;">Default</div>
<div class="t" style="left:96.5px;top:464.90px;font-size:3.2px;height:3.2px;color:#222;font-weight:normal;">▾</div>
<div class="a" style="left:101.5px;top:460.5px;width:0.6px;height:10.5px;background:#d0c8d0;"></div>
<svg class="a" style="left:103px;top:461.5px" width="9" height="8" viewBox="0 0 9 8"><rect x="0.5" y="0.5" width="5" height="4" fill="#e8f4fc" stroke="#3a9ad8" stroke-width="0.6"/><rect x="3" y="3" width="5.5" height="4.5" rx="1" fill="#e8f4fc" stroke="#3a9ad8" stroke-width="0.6"/></svg>
<div class="a" style="left:113.5px;top:461.5px;width:4.5px;height:8px;background:#5a9ae0;"></div>
<div class="t" style="left:114.3px;top:464.30px;font-size:4.2px;height:4.2px;color:#fff;font-weight:normal;">1</div>
<div class="a" style="left:118.5px;top:461.5px;width:4.6px;height:8px;background:#fbf6fb;border-right:0.5px solid #888"></div>
<div class="t" style="left:119.3px;top:464.30px;font-size:4.2px;height:4.2px;color:#333;font-weight:normal;">2</div>
<div class="a" style="left:123.7px;top:461.5px;width:4.6px;height:8px;background:#fbf6fb;border-right:0.5px solid #888"></div>
<div class="t" style="left:124.5px;top:464.30px;font-size:4.2px;height:4.2px;color:#333;font-weight:normal;">3</div>
<div class="a" style="left:128.9px;top:461.5px;width:4.6px;height:8px;background:#fbf6fb;border-right:0.5px solid #888"></div>
<div class="t" style="left:129.7px;top:464.30px;font-size:4.2px;height:4.2px;color:#333;font-weight:normal;">4</div>
<div class="a" style="left:134.1px;top:461.5px;width:4.6px;height:8px;background:#fbf6fb;border-right:0.5px solid #888"></div>
<div class="t" style="left:134.9px;top:464.30px;font-size:4.2px;height:4.2px;color:#333;font-weight:normal;">5</div>
<div class="a" style="left:139.3px;top:461.5px;width:4.6px;height:8px;background:#fbf6fb;border-right:0.5px solid #888"></div>
<div class="t" style="left:140.1px;top:464.30px;font-size:4.2px;height:4.2px;color:#333;font-weight:normal;">6</div>
<div class="a" style="left:144.5px;top:461.5px;width:4.6px;height:8px;background:#fbf6fb;border-right:0.5px solid #888"></div>
<div class="t" style="left:145.3px;top:464.30px;font-size:4.2px;height:4.2px;color:#333;font-weight:normal;">7</div>
<div class="a" style="left:149.7px;top:461.5px;width:4.6px;height:8px;background:#fbf6fb;border-right:0.5px solid #888"></div>
<div class="t" style="left:150.5px;top:464.30px;font-size:4.2px;height:4.2px;color:#333;font-weight:normal;">8</div>
<div class="a" style="left:159px;top:460.5px;width:0.6px;height:10.5px;background:#d0c8d0;"></div>
<div class="a" style="left:165px;top:462.5px;width:5px;height:5px;border:0.7px solid #d05050;border-radius:1px"></div>
<div class="a" style="left:171px;top:461.2px;width:36.5px;height:8.3px;background:#fff;border:0.5px solid #ece6ec"></div>
<div class="t" style="left:173px;top:464.40px;font-size:3.8px;height:3.8px;color:#aaa;font-weight:normal;">0:0.000</div>
<div class="a" style="left:208.5px;top:460.5px;width:0.6px;height:10.5px;background:#d0c8d0;"></div>
<svg class="a" style="left:211px;top:462px" width="6" height="7" viewBox="0 0 6 7"><path d="M1,6 A4,4 0 0 1 5,1" stroke="#c04040" stroke-width="0.8" fill="none"/><rect x="0.5" y="4" width="2.5" height="2.5" fill="#777"/></svg>
<div class="a" style="left:218px;top:461.2px;width:37px;height:8.3px;background:#fff;border:0.5px solid #ece6ec"></div>
<div class="t" style="left:220px;top:464.40px;font-size:3.8px;height:3.8px;color:#aaa;font-weight:normal;">0.0000°</div>
<div class="a" style="left:257px;top:460.5px;width:0.6px;height:10.5px;background:#d0c8d0;"></div>
<div class="t" style="left:260.5px;top:463.75px;font-size:5.5px;height:5.5px;color:#111;font-weight:bold;">Z</div>
<div class="a" style="left:266.5px;top:461.2px;width:37px;height:8.3px;background:#fff;border:0.5px solid #ece6ec"></div>
<div class="t" style="left:268.5px;top:464.40px;font-size:3.8px;height:3.8px;color:#999;font-weight:normal;">144.5.989</div>
<div class="a" style="left:0px;top:472px;width:900px;height:8px;background:#f7f0f7;"></div>
<div class="t" style="left:0.5px;top:475.35px;font-size:4.3px;height:4.3px;color:#333;font-weight:normal;">Delete Geographic Coordinate System &gt; Identify ele</div>
<div class="a" style="left:102px;top:472.8px;width:0.5px;height:7px;background:#b8b0b8;"></div>
<div class="a" style="left:113px;top:472.8px;width:0.5px;height:7px;background:#b8b0b8;"></div>
<div class="a" style="left:684.7px;top:472.8px;width:0.5px;height:7px;background:#b8b0b8;"></div>
<div class="a" style="left:704px;top:472.8px;width:0.5px;height:7px;background:#b8b0b8;"></div>
<div class="a" style="left:752px;top:472.8px;width:0.5px;height:7px;background:#b8b0b8;"></div>
<div class="a" style="left:792.5px;top:472.8px;width:0.5px;height:7px;background:#b8b0b8;"></div>
<div class="a" style="left:803px;top:472.8px;width:0.5px;height:7px;background:#b8b0b8;"></div>
<div class="a" style="left:815px;top:472.8px;width:0.5px;height:7px;background:#b8b0b8;"></div>
<div class="a" style="left:835.5px;top:472.8px;width:0.5px;height:7px;background:#b8b0b8;"></div>
<div class="a" style="left:847px;top:472.8px;width:0.5px;height:7px;background:#b8b0b8;"></div>
<div class="a" style="left:867.2px;top:472.8px;width:0.5px;height:7px;background:#b8b0b8;"></div>
<div class="a" style="left:876.7px;top:472.8px;width:0.5px;height:7px;background:#b8b0b8;"></div>
<div class="a" style="left:889px;top:472.8px;width:0.5px;height:7px;background:#b8b0b8;"></div>
<svg class="a" style="left:687px;top:473.5px" width="6" height="6" viewBox="0 0 6 6"><path d="M0.5,5.5 C3,5.5 4,3 5.5,0.5" stroke="#3a7ad8" stroke-width="0.8" fill="none"/></svg>
<div class="a" style="left:697px;top:475px;width:4px;height:3.5px;background:#e0b030;border-radius:0.5px"></div>
<div class="a" style="left:697.8px;top:473.3px;width:2.5px;height:2.5px;border:0.5px solid #555;border-radius:1px 1px 0 0"></div>
<div class="t" style="left:705px;top:475.20px;font-size:4.2px;height:4.2px;color:#333;font-weight:normal;">Default</div>
<div class="a" style="left:818.5px;top:473.5px;width:4.5px;height:6px;background:#333;border-radius:0.5px"></div>
<div class="a" style="left:827.5px;top:473.5px;width:5px;height:6px;background:#f4f0f4;border:0.5px solid #ccc"></div>
<div class="a" style="left:839.5px;top:473.5px;width:5.5px;height:5.5px;border-radius:50%;background:conic-gradient(#3aa040 0 40%,#2a80d8 0)"></div>
<div class="a" style="left:858px;top:473.5px;width:4px;height:6px;background:#2a6ad0;"></div>
<div class="a" style="left:861px;top:476.5px;width:3px;height:3px;border-radius:50%;background:#d83030"></div>
<div class="a" style="left:880px;top:473.5px;width:5px;height:6px;background:#e4e0e4;border:0.5px solid #bbb"></div>
<div class="a" style="left:892.5px;top:473.5px;width:5px;height:5px;border-radius:50%;background:#3a9ad8"></div>
<div class="a" style="left:895.5px;top:476.5px;width:3px;height:3px;border-radius:50%;background:#d83030"></div>
<div class="a" style="left:45px;top:121.3px;width:170.5px;height:102.2px;background:#fff;border-radius:2.5px;overflow:hidden"></div>
<div class="a" style="left:45px;top:121.3px;width:170.5px;height:10px;background:#faf5fa;border-radius:2.5px 2.5px 0 0"></div>
<svg class="a" style="left:48px;top:123.5px" width="6" height="6" viewBox="0 0 12 12"><path d="M6,0.5 C3,0.5 2.5,1.5 2.5,3 V5 H6.5 V5.7 H1.5 C0,5.7 0,8 0.5,9 1,10 1.5,10 2.5,10 V8 C2.5,7 3.5,6.5 4.5,6.5 H8 C9,6.5 9.5,6 9.5,5 V2.5 C9.5,1 8,0.5 6,0.5Z" fill="#3470b0"/><path d="M7,11.5 C10,11.5 10.5,10.5 10.5,9 V7 H6.5 V6.3 H11.5 C13,6.3 13,4 12.5,3 12,2 11.5,2 10.5,2 V4 C10.5,5 9.5,5.5 8.5,5.5 H5 C4,5.5 3.5,6 3.5,7 V9.5 C3.5,11 5,11.5 7,11.5Z" fill="#f2c634"/></svg>
<div class="t" style="left:55.5px;top:125.00px;font-size:4.4px;height:4.4px;color:#888;font-weight:normal;">Python Manager</div>
<div class="a" style="left:174px;top:126.2px;width:3.5px;height:0.5px;background:#999;"></div>
<div class="a" style="left:189.5px;top:124.5px;width:3.5px;height:3.5px;border:0.5px solid #aaa;border-radius:0.6px"></div>
<svg class="a" style="left:204.60000000000002px;top:123.5px" width="5.4" height="5.4" viewBox="0 0 5.4 5.4"><path d="M0.5,0.5 L4.9,4.9 M4.9,0.5 L0.5,4.9" stroke="#777" stroke-width="0.55"/></svg>
<div class="a" style="left:45px;top:131.3px;width:170.5px;height:14.2px;background:#f6eff8;"></div>
<svg class="a" style="left:47px;top:134px" width="8" height="10" viewBox="0 0 8 10"><path d="M0.5,0.5 H5 L7,2.5 V9.5 H0.5Z" fill="#fafafa" stroke="#aaa" stroke-width="0.5"/><circle cx="6" cy="8" r="1.5" fill="#3aa040"/></svg>
<svg class="a" style="left:59.5px;top:135.5px" width="9" height="7" viewBox="0 0 9 7"><path d="M0.5,1 H3.5 L4.5,2 H8.5 V6.5 H0.5Z" fill="#e8c050"/><path d="M1,3 H8 M1,4.5 H8" stroke="#c89a30" stroke-width="0.4"/></svg>
<svg class="a" style="left:72.5px;top:135.5px" width="9" height="8" viewBox="0 0 9 8"><path d="M0.5,1 H3.5 L4.5,2 H8.5 V6.5 H0.5Z" fill="#e8c050"/><path d="M6.5,3.5 V8 M4.3,5.7 H8.8" stroke="#3aa040" stroke-width="1.2"/></svg>
<svg class="a" style="left:86px;top:135.5px" width="9" height="8" viewBox="0 0 9 8"><path d="M0.5,1 H3.5 L4.5,2 H8.5 V6.5 H0.5Z" fill="#f4ecec"/><path d="M5,4 L8.5,7.5 M8.5,4 L5,7.5" stroke="#e8a0a0" stroke-width="0.7"/></svg>
<svg class="a" style="left:99.5px;top:134px" width="9" height="9" viewBox="0 0 12 12"><path d="M6,0.5 C3,0.5 2.5,1.5 2.5,3 V5 H6.5 V5.7 H1.5 C0,5.7 0,8 0.5,9 1,10 1.5,10 2.5,10 V8 C2.5,7 3.5,6.5 4.5,6.5 H8 C9,6.5 9.5,6 9.5,5 V2.5 C9.5,1 8,0.5 6,0.5Z" fill="#3470b0"/><path d="M7,11.5 C10,11.5 10.5,10.5 10.5,9 V7 H6.5 V6.3 H11.5 C13,6.3 13,4 12.5,3 12,2 11.5,2 10.5,2 V4 C10.5,5 9.5,5.5 8.5,5.5 H5 C4,5.5 3.5,6 3.5,7 V9.5 C3.5,11 5,11.5 7,11.5Z" fill="#f2c634"/></svg>
<svg class="a" style="left:111.5px;top:134px" width="9" height="9" viewBox="0 0 12 12"><path d="M6,0.5 C3,0.5 2.5,1.5 2.5,3 V5 H6.5 V5.7 H1.5 C0,5.7 0,8 0.5,9 1,10 1.5,10 2.5,10 V8 C2.5,7 3.5,6.5 4.5,6.5 H8 C9,6.5 9.5,6 9.5,5 V2.5 C9.5,1 8,0.5 6,0.5Z" fill="#3470b0"/><path d="M7,11.5 C10,11.5 10.5,10.5 10.5,9 V7 H6.5 V6.3 H11.5 C13,6.3 13,4 12.5,3 12,2 11.5,2 10.5,2 V4 C10.5,5 9.5,5.5 8.5,5.5 H5 C4,5.5 3.5,6 3.5,7 V9.5 C3.5,11 5,11.5 7,11.5Z" fill="#f2c634"/></svg>
<div class="t" style="left:123px;top:138.00px;font-size:3px;height:3px;color:#555;font-weight:normal;">▾</div>
<div class="a" style="left:194.5px;top:134.5px;width:8.5px;height:8.5px;border-radius:50%;background:radial-gradient(circle at 45% 40%,#5cc0f8,#1c7ed8)"></div>
<div class="t" style="left:197.2px;top:137.10px;font-size:5px;height:5px;color:#fff;font-weight:bold;">?</div>
<div class="t" style="left:206.3px;top:138.10px;font-size:3px;height:3px;color:#555;font-weight:normal;">▾</div>
<div class="a" style="left:45px;top:145.5px;width:170.5px;height:10.5px;background:#fcf6fc;border-bottom:0.5px solid #eee4ee"></div>
<div class="t" style="left:47px;top:149.25px;font-size:4.5px;height:4.5px;color:#222;font-weight:bold;">Project Name</div>
<svg class="a" style="left:76px;top:148.3px" width="4.5" height="5" viewBox="0 0 4.5 5"><path d="M0.3,0.5 H4.2 L2.8,2.3 V4.7 L1.7,4 V2.3Z" fill="#333"/></svg>
<div class="a" style="left:82.5px;top:146px;width:0.5px;height:10px;background:#e0d8e0;"></div>
<div class="t" style="left:84.5px;top:149.25px;font-size:4.5px;height:4.5px;color:#222;font-weight:bold;">Argument</div>
<svg class="a" style="left:209px;top:148.3px" width="4.5" height="5" viewBox="0 0 4.5 5"><path d="M0.3,0.5 H4.2 L2.8,2.3 V4.7 L1.7,4 V2.3Z" fill="#333"/></svg>
<div class="t" style="left:48.3px;top:158.40px;font-size:3.2px;height:3.2px;color:#333;font-weight:normal;">▶</div>
<div class="a" style="left:53.3px;top:155.6px;width:29.3px;height:7.3px;background:#fff;border:0.5px solid #666"></div>
<div class="t" style="left:55px;top:157.95px;font-size:4.3px;height:4.3px;color:#555;font-weight:normal;">Examples</div>
<div class="t" style="left:48.5px;top:166.60px;font-size:3px;height:3px;color:#333;font-weight:normal;">◢</div>
<div class="t" style="left:54.5px;top:166.10px;font-size:4.4px;height:4.4px;color:#444;font-weight:normal;">Documents</div>
<div class="a" style="left:45px;top:171px;width:170.5px;height:7px;background:#3d96ee;"></div>
<div class="t" style="left:62px;top:173.15px;font-size:4.3px;height:4.3px;color:#fff;font-weight:normal;">CreateGCS</div>
<div class="a" style="left:269px;top:57px;width:454.5px;height:335px;background:#fcf6fc;border-radius:2.5px;border:0.5px solid #e2dae4"></div>
<svg class="a" style="left:271px;top:59.5px" width="6" height="6" viewBox="0 0 12 12"><path d="M6,0.5 C3,0.5 2.5,1.5 2.5,3 V5 H6.5 V5.7 H1.5 C0,5.7 0,8 0.5,9 1,10 1.5,10 2.5,10 V8 C2.5,7 3.5,6.5 4.5,6.5 H8 C9,6.5 9.5,6 9.5,5 V2.5 C9.5,1 8,0.5 6,0.5Z" fill="#3470b0"/><path d="M7,11.5 C10,11.5 10.5,10.5 10.5,9 V7 H6.5 V6.3 H11.5 C13,6.3 13,4 12.5,3 12,2 11.5,2 10.5,2 V4 C10.5,5 9.5,5.5 8.5,5.5 H5 C4,5.5 3.5,6 3.5,7 V9.5 C3.5,11 5,11.5 7,11.5Z" fill="#f2c634"/></svg>
<div class="t" style="left:279.5px;top:60.80px;font-size:4.4px;height:4.4px;color:#777;font-weight:normal;">Python Editor - C:\Users\Nilesh.Sawant\Documents\CreateGCS.py</div>
<div class="a" style="left:682px;top:62px;width:3.5px;height:0.5px;background:#888;"></div>
<div class="a" style="left:697.5px;top:60.3px;width:3.5px;height:3.5px;border:0.5px solid #999;border-radius:0.8px"></div>
<svg class="a" style="left:712.8px;top:59.5px" width="5.4" height="5.4" viewBox="0 0 5.4 5.4"><path d="M0.5,0.5 L4.9,4.9 M4.9,0.5 L0.5,4.9" stroke="#666" stroke-width="0.55"/></svg>
<div class="a" style="left:269.5px;top:67px;width:454px;height:0.5px;background:#e6dfe8;"></div>
<div class="a" style="left:269.5px;top:67.5px;width:454px;height:13.3px;background:#f4eef6;"></div>
<svg class="a" style="left:272px;top:70.5px" width="8" height="8" viewBox="0 0 8 8"><path d="M0.5,0.5 H6.5 L7.5,1.5 V7.5 H0.5Z" fill="none" stroke="#c8c4ca" stroke-width="0.8"/><rect x="2" y="4.5" width="4" height="3" fill="#d8d4da"/></svg>
<svg class="a" style="left:283.5px;top:69.5px" width="10" height="10" viewBox="0 0 12 12"><path d="M6,0.5 C3,0.5 2.5,1.5 2.5,3 V5 H6.5 V5.7 H1.5 C0,5.7 0,8 0.5,9 1,10 1.5,10 2.5,10 V8 C2.5,7 3.5,6.5 4.5,6.5 H8 C9,6.5 9.5,6 9.5,5 V2.5 C9.5,1 8,0.5 6,0.5Z" fill="#3470b0"/><path d="M7,11.5 C10,11.5 10.5,10.5 10.5,9 V7 H6.5 V6.3 H11.5 C13,6.3 13,4 12.5,3 12,2 11.5,2 10.5,2 V4 C10.5,5 9.5,5.5 8.5,5.5 H5 C4,5.5 3.5,6 3.5,7 V9.5 C3.5,11 5,11.5 7,11.5Z" fill="#f2c634"/><rect x="9" y="8.5" width="3" height="3" fill="#3a9a40"/></svg>
<div class="a" style="left:385px;top:68px;width:0.5px;height:12.5px;background:#dcd6de;"></div>
<div class="a" style="left:438.5px;top:68px;width:0.5px;height:12.5px;background:#e4dee6;"></div>
<div class="a" style="left:464.5px;top:68px;width:0.5px;height:12.5px;background:#e4dee6;"></div>
<svg class="a" style="left:388.5px;top:69.5px" width="8" height="9" viewBox="0 0 8 9"><path d="M1,0.5 L6,6 M7,0.5 L2,6" stroke="#c4c0c4" stroke-width="0.7"/><circle cx="2" cy="7" r="1.3" fill="none" stroke="#c4c0c4" stroke-width="0.6"/><circle cx="6" cy="7" r="1.3" fill="none" stroke="#c4c0c4" stroke-width="0.6"/></svg>
<svg class="a" style="left:399px;top:70px" width="7" height="8" viewBox="0 0 7 8"><path d="M1,1 L5,7" stroke="#ddd" stroke-width="0.6"/></svg>
<svg class="a" style="left:412px;top:69px" width="8" height="10" viewBox="0 0 8 10"><rect x="0.5" y="1" width="6" height="8.5" fill="#c8a060"/><rect x="2.5" y="3" width="5" height="6.5" fill="#f4f0f0" stroke="#999" stroke-width="0.4"/><rect x="3" y="6.5" width="4" height="3" fill="#c03020"/><rect x="2" y="0.5" width="3" height="1.5" fill="#555"/></svg>
<svg class="a" style="left:424.5px;top:70.5px" width="7" height="7" viewBox="0 0 7 7"><path d="M0.8,0.8 L6.2,6.2 M6.2,0.8 L0.8,6.2" stroke="#f0b4b4" stroke-width="0.8"/></svg>
<svg class="a" style="left:440.5px;top:70.5px" width="8" height="7" viewBox="0 0 8 7"><path d="M0.5,3 L3.5,0.5 V2 C6,2 7.5,3.5 7.5,6.5 C6.5,4.5 5,4 3.5,4 V5.5Z" fill="#2a6ad0"/></svg>
<svg class="a" style="left:454.5px;top:70.5px" width="8" height="7" viewBox="0 0 8 7"><path d="M7.5,3 L4.5,0.5 V2 C2,2 0.5,3.5 0.5,6.5 C1.5,4.5 3,4 4.5,4 V5.5Z" fill="#b8cce8"/></svg>
<svg class="a" style="left:468.5px;top:69.5px" width="8" height="9" viewBox="0 0 8 9"><rect x="0.5" y="2" width="3" height="6.5" rx="0.8" fill="#111"/><rect x="4.5" y="2" width="3" height="6.5" rx="0.8" fill="#111"/><rect x="1" y="0.5" width="2" height="2" fill="#333"/><rect x="5" y="0.5" width="2" height="2" fill="#333"/><rect x="3" y="3" width="2" height="2" fill="#222"/></svg>
<svg class="a" style="left:689.5px;top:69.3px" width="10" height="9" viewBox="0 0 10 9"><circle cx="5.2" cy="4.3" r="3.8" fill="none" stroke="#666" stroke-width="0.7"/><path d="M1.8,6.5 L0.8,8.5 3,7.6" fill="none" stroke="#666" stroke-width="0.6"/><path d="M5.2,2.6 L6.9,4.3 5.2,6 3.5,4.3Z" fill="none" stroke="#555" stroke-width="0.6"/></svg>
<div class="a" style="left:702.5px;top:69.8px;width:8.5px;height:8.5px;border-radius:50%;background:radial-gradient(circle at 45% 40%,#5cc0f8,#1c7ed8)"></div>
<div class="t" style="left:705.2px;top:72.40px;font-size:5px;height:5px;color:#fff;font-weight:bold;">?</div>
<div class="t" style="left:713.5px;top:73.50px;font-size:3px;height:3px;color:#555;font-weight:normal;">▾</div>
<div class="a" style="left:269.5px;top:80.8px;width:115.8px;height:311px;background:#fdf7fd;"></div>
<div class="t" style="left:271px;top:84.70px;font-size:4.4px;height:4.4px;color:#4a4a4a;font-weight:normal;">AcsExample.py</div>
<div class="t" style="left:271px;top:92.46px;font-size:4.4px;height:4.4px;color:#4a4a4a;font-weight:normal;">AppData.py</div>
<div class="t" style="left:271px;top:100.22px;font-size:4.4px;height:4.4px;color:#4a4a4a;font-weight:normal;">ArcExample.py</div>
<div class="t" style="left:271px;top:107.98px;font-size:4.4px;height:4.4px;color:#4a4a4a;font-weight:normal;">BoltAndNut.py</div>
<div class="t" style="left:271px;top:115.74px;font-size:4.4px;height:4.4px;color:#4a4a4a;font-weight:normal;">ChangeTrackCallbacks.py</div>
<div class="t" style="left:271px;top:123.50px;font-size:4.4px;height:4.4px;color:#4a4a4a;font-weight:normal;">Constraint2d.py</div>
<div class="t" style="left:271px;top:131.26px;font-size:4.4px;height:4.4px;color:#4a4a4a;font-weight:normal;">Constraint3d.py</div>
<div class="a" style="left:270px;top:136.92000000000002px;width:108.3px;height:7.2px;background:#3a98f2;"></div>
<div class="t" style="left:271px;top:139.02px;font-size:4.4px;height:4.4px;color:#fff;font-weight:normal;">CreateGCS.py</div>
<div class="t" style="left:271px;top:146.78px;font-size:4.4px;height:4.4px;color:#4a4a4a;font-weight:normal;">CreateModifyModel.py</div>
<div class="t" style="left:271px;top:154.54px;font-size:4.4px;height:4.4px;color:#4a4a4a;font-weight:normal;">CreateSections.py</div>
<div class="t" style="left:271px;top:162.30px;font-size:4.4px;height:4.4px;color:#4a4a4a;font-weight:normal;">CreateTextNodes.py</div>
<div class="t" style="left:271px;top:170.06px;font-size:4.4px;height:4.4px;color:#4a4a4a;font-weight:normal;">CreationExample.py</div>
<div class="t" style="left:271px;top:177.82px;font-size:4.4px;height:4.4px;color:#4a4a4a;font-weight:normal;">DebugPlaceLine.py</div>
<div class="t" style="left:271px;top:185.58px;font-size:4.4px;height:4.4px;color:#4a4a4a;font-weight:normal;">DgnAttachmentExample.py</div>
<div class="t" style="left:271px;top:193.34px;font-size:4.4px;height:4.4px;color:#4a4a4a;font-weight:normal;">DrawBSPLine.py</div>
<div class="t" style="left:271px;top:201.10px;font-size:4.4px;height:4.4px;color:#4a4a4a;font-weight:normal;">DrawCircles.py</div>
<div class="t" style="left:271px;top:208.86px;font-size:4.4px;height:4.4px;color:#4a4a4a;font-weight:normal;">DrawCurve.py</div>
<div class="t" style="left:271px;top:216.62px;font-size:4.4px;height:4.4px;color:#4a4a4a;font-weight:normal;">DrawElementWithArguments.py</div>
<div class="t" style="left:271px;top:224.38px;font-size:4.4px;height:4.4px;color:#4a4a4a;font-weight:normal;">DrawGroupedHole.py</div>
<div class="t" style="left:271px;top:232.14px;font-size:4.4px;height:4.4px;color:#4a4a4a;font-weight:normal;">DrawLine.py</div>
<div class="t" style="left:271px;top:239.90px;font-size:4.4px;height:4.4px;color:#4a4a4a;font-weight:normal;">DrawMultiLine.py</div>
<div class="t" style="left:271px;top:247.66px;font-size:4.4px;height:4.4px;color:#4a4a4a;font-weight:normal;">DrawRoundRectangles.py</div>
<div class="t" style="left:271px;top:255.42px;font-size:4.4px;height:4.4px;color:#4a4a4a;font-weight:normal;">ECDumpUtility.py</div>
<div class="t" style="left:271px;top:263.18px;font-size:4.4px;height:4.4px;color:#4a4a4a;font-weight:normal;">ECXSchema.py</div>
<div class="t" style="left:271px;top:270.94px;font-size:4.4px;height:4.4px;color:#4a4a4a;font-weight:normal;">ElementCopyTool.py</div>
<div class="t" style="left:271px;top:278.70px;font-size:4.4px;height:4.4px;color:#4a4a4a;font-weight:normal;">ElementDrawer.py</div>
<div class="t" style="left:271px;top:286.46px;font-size:4.4px;height:4.4px;color:#4a4a4a;font-weight:normal;">ElementFlood.py</div>
<div class="t" style="left:271px;top:294.22px;font-size:4.4px;height:4.4px;color:#4a4a4a;font-weight:normal;">ElementModifier.py</div>
<div class="t" style="left:271px;top:301.98px;font-size:4.4px;height:4.4px;color:#4a4a4a;font-weight:normal;">ElementMover.py</div>
<div class="t" style="left:271px;top:309.74px;font-size:4.4px;height:4.4px;color:#4a4a4a;font-weight:normal;">ElementRotateTool.py</div>
<div class="t" style="left:271px;top:317.50px;font-size:4.4px;height:4.4px;color:#4a4a4a;font-weight:normal;">ElementScaleTool.py</div>
<div class="t" style="left:271px;top:325.26px;font-size:4.4px;height:4.4px;color:#4a4a4a;font-weight:normal;">ElementsToDisplaySet.py</div>
<div class="t" style="left:271px;top:333.02px;font-size:4.4px;height:4.4px;color:#4a4a4a;font-weight:normal;">EllipseExample.py</div>
<div class="t" style="left:271px;top:340.78px;font-size:4.4px;height:4.4px;color:#4a4a4a;font-weight:normal;">ExampleViewTool.py</div>
<div class="t" style="left:271px;top:348.54px;font-size:4.4px;height:4.4px;color:#4a4a4a;font-weight:normal;">ExtractItemTypesToExcel.py</div>
<div class="t" style="left:271px;top:356.30px;font-size:4.4px;height:4.4px;color:#4a4a4a;font-weight:normal;">GeospatialContextConnection.py</div>
<div class="t" style="left:271px;top:364.06px;font-size:4.4px;height:4.4px;color:#4a4a4a;font-weight:normal;">GeospatialContextUtilities.py</div>
<div class="t" style="left:271px;top:371.82px;font-size:4.4px;height:4.4px;color:#4a4a4a;font-weight:normal;">GetInput.py</div>
<div class="t" style="left:271px;top:379.58px;font-size:4.4px;height:4.4px;color:#4a4a4a;font-weight:normal;">GlassColorDarkerToLighter.py</div>
<div class="t" style="left:271px;top:387.34px;font-size:4.4px;height:4.4px;color:#4a4a4a;font-weight:normal;">GlassColorRandom.py</div>
<div class="a" style="left:380.3px;top:82px;width:4px;height:308px;background:#f4eef4;"></div>
<div class="t" style="left:380.8px;top:84.70px;font-size:2.6px;height:2.6px;color:#555;font-weight:normal;">▲</div>
<div class="t" style="left:380.8px;top:386.90px;font-size:2.6px;height:2.6px;color:#555;font-weight:normal;">▼</div>
<div class="a" style="left:380.8px;top:88.5px;width:3px;height:108.5px;background:#d6cfd9;"></div>
<div class="a" style="left:385.3px;top:80.8px;width:200px;height:208px;background:#fff;border:0.8px solid #a9c2de"></div>
<div class="a" style="left:400.3px;top:81.5px;width:0.5px;height:198px;background:#ece8f0;"></div>
<div class="a" style="left:0;top:0;width:900px;height:480px;clip-path:inset(81.5px 320px 200.5px 385.5px)">
<div class="t" style="left:399.3px;top:83.70px;font-size:4.0px;height:4.0px;color:#6f9cc0;font-weight:normal;font-family:'Liberation Mono';transform:translateX(-100%);">18</div>
<div class="t m" style="left:417.54px;top:83.71px;font-size:4.183px"><span style="color:#d8a030">if</span> ACTIVEMODEL <span style="color:#d8a030">is</span> <span style="color:#d8a030">None</span>:</div>
<div class="t" style="left:399.3px;top:89.04px;font-size:4.0px;height:4.0px;color:#6f9cc0;font-weight:normal;font-family:'Liberation Mono';transform:translateX(-100%);">19</div>
<div class="t m" style="left:427.58px;top:89.05px;font-size:4.183px"><span style="color:#d8a030">print</span>(<span style="color:#3a9a3a">&quot;No active DGN model found.&quot;</span>)</div>
<div class="t" style="left:399.3px;top:94.38px;font-size:4.0px;height:4.0px;color:#6f9cc0;font-weight:normal;font-family:'Liberation Mono';transform:translateX(-100%);">20</div>
<div class="t m" style="left:427.58px;top:94.39px;font-size:4.183px"><span style="color:#d8a030">return</span> <span style="color:#d8a030">False</span></div>
<div class="t" style="left:399.3px;top:99.72px;font-size:4.0px;height:4.0px;color:#6f9cc0;font-weight:normal;font-family:'Liberation Mono';transform:translateX(-100%);">21</div>
<div class="t" style="left:399.3px;top:105.06px;font-size:4.0px;height:4.0px;color:#6f9cc0;font-weight:normal;font-family:'Liberation Mono';transform:translateX(-100%);">22</div>
<div class="t m" style="left:417.54px;top:105.07px;font-size:4.183px"><span style="color:#b02020"># Check if a GCS is already present in the active model</span></div>
<div class="t" style="left:399.3px;top:110.40px;font-size:4.0px;height:4.0px;color:#6f9cc0;font-weight:normal;font-family:'Liberation Mono';transform:translateX(-100%);">23</div>
<div class="t m" style="left:417.54px;top:110.41px;font-size:4.183px">dgnGCS = DgnGCS.FromModel(ACTIVEMODEL, <span style="color:#d8a030">True</span>)</div>
<div class="t" style="left:399.3px;top:115.74px;font-size:4.0px;height:4.0px;color:#6f9cc0;font-weight:normal;font-family:'Liberation Mono';transform:translateX(-100%);">24</div>
<div class="t m" style="left:417.54px;top:115.75px;font-size:4.183px"><span style="color:#d8a030">if</span> dgnGCS <span style="color:#d8a030">is</span> <span style="color:#d8a030">not</span> <span style="color:#d8a030">None</span>:</div>
<div class="t" style="left:399.3px;top:121.08px;font-size:4.0px;height:4.0px;color:#6f9cc0;font-weight:normal;font-family:'Liberation Mono';transform:translateX(-100%);">25</div>
<div class="t m" style="left:427.58px;top:121.09px;font-size:4.183px"><span style="color:#d8a030">print</span>(<span style="color:#3a9a3a">&quot;A GCS is already present in the active model.&quot;</span>)</div>
<div class="t" style="left:399.3px;top:126.42px;font-size:4.0px;height:4.0px;color:#6f9cc0;font-weight:normal;font-family:'Liberation Mono';transform:translateX(-100%);">26</div>
<div class="t m" style="left:427.58px;top:126.43px;font-size:4.183px"><span style="color:#d8a030">return</span> <span style="color:#d8a030">True</span></div>
<div class="t" style="left:399.3px;top:131.76px;font-size:4.0px;height:4.0px;color:#6f9cc0;font-weight:normal;font-family:'Liberation Mono';transform:translateX(-100%);">27</div>
<div class="t" style="left:399.3px;top:137.10px;font-size:4.0px;height:4.0px;color:#6f9cc0;font-weight:normal;font-family:'Liberation Mono';transform:translateX(-100%);">28</div>
<div class="t m" style="left:417.54px;top:137.11px;font-size:4.183px"><span style="color:#b02020"># Create a new GCS definition using the EPSG code</span></div>
<div class="t" style="left:399.3px;top:142.44px;font-size:4.0px;height:4.0px;color:#6f9cc0;font-weight:normal;font-family:'Liberation Mono';transform:translateX(-100%);">29</div>
<div class="t m" style="left:417.54px;top:142.45px;font-size:4.183px">base = BaseGCS()</div>
<div class="t" style="left:399.3px;top:147.78px;font-size:4.0px;height:4.0px;color:#6f9cc0;font-weight:normal;font-family:'Liberation Mono';transform:translateX(-100%);">30</div>
<div class="t m" style="left:417.54px;top:147.79px;font-size:4.183px">base.InitFromEPSGCode(epsg_code)</div>
<div class="t" style="left:399.3px;top:153.12px;font-size:4.0px;height:4.0px;color:#6f9cc0;font-weight:normal;font-family:'Liberation Mono';transform:translateX(-100%);">31</div>
<div class="t m" style="left:417.54px;top:153.13px;font-size:4.183px">newGCS = DgnGCS.CreateGCS(base, ACTIVEMODEL)</div>
<div class="t" style="left:399.3px;top:158.46px;font-size:4.0px;height:4.0px;color:#6f9cc0;font-weight:normal;font-family:'Liberation Mono';transform:translateX(-100%);">32</div>
<div class="t m" style="left:417.54px;top:158.47px;font-size:4.183px"><span style="color:#d8a030">if</span> newGCS <span style="color:#d8a030">is</span> <span style="color:#d8a030">None</span>:</div>
<div class="t" style="left:399.3px;top:163.80px;font-size:4.0px;height:4.0px;color:#6f9cc0;font-weight:normal;font-family:'Liberation Mono';transform:translateX(-100%);">33</div>
<div class="t m" style="left:427.58px;top:163.81px;font-size:4.183px"><span style="color:#d8a030">print</span>(<span style="color:#3a9a3a">&quot;Failed to create GCS.&quot;</span>)</div>
<div class="t" style="left:399.3px;top:169.14px;font-size:4.0px;height:4.0px;color:#6f9cc0;font-weight:normal;font-family:'Liberation Mono';transform:translateX(-100%);">34</div>
<div class="t m" style="left:427.58px;top:169.15px;font-size:4.183px"><span style="color:#d8a030">return</span> <span style="color:#d8a030">False</span></div>
<div class="t" style="left:399.3px;top:174.48px;font-size:4.0px;height:4.0px;color:#6f9cc0;font-weight:normal;font-family:'Liberation Mono';transform:translateX(-100%);">35</div>
<div class="t" style="left:399.3px;top:179.82px;font-size:4.0px;height:4.0px;color:#6f9cc0;font-weight:normal;font-family:'Liberation Mono';transform:translateX(-100%);">36</div>
<div class="t m" style="left:417.54px;top:179.83px;font-size:4.183px"><span style="color:#b02020"># Add the GCS to the active model</span></div>
<div class="t" style="left:399.3px;top:185.16px;font-size:4.0px;height:4.0px;color:#6f9cc0;font-weight:normal;font-family:'Liberation Mono';transform:translateX(-100%);">37</div>
<div class="t m" style="left:417.54px;top:185.17px;font-size:4.183px">newGCS.ToModel(ACTIVEMODEL, <span style="color:#d8a030">True</span>, <span style="color:#d8a030">True</span>, <span style="color:#d8a030">True</span>, <span style="color:#d8a030">True</span>)</div>
<div class="t" style="left:399.3px;top:190.50px;font-size:4.0px;height:4.0px;color:#6f9cc0;font-weight:normal;font-family:'Liberation Mono';transform:translateX(-100%);">38</div>
<div class="t m" style="left:417.54px;top:190.51px;font-size:4.183px"><span style="color:#d8a030">print</span>(<span style="color:#3a9a3a">f&quot;Successfully added GCS EPSG:{epsg_code} to the active DGN model.&quot;</span>)</div>
<div class="t" style="left:399.3px;top:195.84px;font-size:4.0px;height:4.0px;color:#6f9cc0;font-weight:normal;font-family:'Liberation Mono';transform:translateX(-100%);">39</div>
<div class="t m" style="left:417.54px;top:195.85px;font-size:4.183px"><span style="color:#d8a030">return</span> <span style="color:#d8a030">True</span></div>
<div class="t" style="left:399.3px;top:201.18px;font-size:4.0px;height:4.0px;color:#6f9cc0;font-weight:normal;font-family:'Liberation Mono';transform:translateX(-100%);">40</div>
<div class="t" style="left:399.3px;top:206.52px;font-size:4.0px;height:4.0px;color:#6f9cc0;font-weight:normal;font-family:'Liberation Mono';transform:translateX(-100%);">41</div>
<div class="t m" style="left:407.50px;top:206.53px;font-size:4.183px"><span style="color:#b02020"># Main</span></div>
<div class="t" style="left:399.3px;top:211.86px;font-size:4.0px;height:4.0px;color:#6f9cc0;font-weight:normal;font-family:'Liberation Mono';transform:translateX(-100%);">42</div>
<div class="t m" style="left:407.50px;top:211.87px;font-size:4.183px"><span style="color:#d8a030">if</span> __name__ == <span style="color:#3a9a3a">&quot;__main__&quot;</span>:</div>
<div class="t" style="left:399.3px;top:217.20px;font-size:4.0px;height:4.0px;color:#6f9cc0;font-weight:normal;font-family:'Liberation Mono';transform:translateX(-100%);">43</div>
<div class="t m" style="left:417.54px;top:217.21px;font-size:4.183px"><span style="color:#d8a030">print</span>(<span style="color:#3a9a3a">&quot;Script start...&quot;</span>)</div>
<div class="t" style="left:399.3px;top:222.54px;font-size:4.0px;height:4.0px;color:#6f9cc0;font-weight:normal;font-family:'Liberation Mono';transform:translateX(-100%);">44</div>
<div class="t" style="left:399.3px;top:227.88px;font-size:4.0px;height:4.0px;color:#6f9cc0;font-weight:normal;font-family:'Liberation Mono';transform:translateX(-100%);">45</div>
<div class="t m" style="left:417.54px;top:227.89px;font-size:4.183px"><span style="color:#b02020"># EPSG code for the GCS to add</span></div>
<div class="t" style="left:399.3px;top:233.22px;font-size:4.0px;height:4.0px;color:#6f9cc0;font-weight:normal;font-family:'Liberation Mono';transform:translateX(-100%);">46</div>
<div class="t m" style="left:417.54px;top:233.23px;font-size:4.183px">epsg_code = <span style="color:#999">6439</span></div>
<div class="t" style="left:399.3px;top:238.56px;font-size:4.0px;height:4.0px;color:#6f9cc0;font-weight:normal;font-family:'Liberation Mono';transform:translateX(-100%);">47</div>
<div class="t" style="left:399.3px;top:243.90px;font-size:4.0px;height:4.0px;color:#6f9cc0;font-weight:normal;font-family:'Liberation Mono';transform:translateX(-100%);">48</div>
<div class="t m" style="left:417.54px;top:243.91px;font-size:4.183px"><span style="color:#b02020"># Add the GCS to the active DGN model</span></div>
<div class="t" style="left:399.3px;top:249.24px;font-size:4.0px;height:4.0px;color:#6f9cc0;font-weight:normal;font-family:'Liberation Mono';transform:translateX(-100%);">49</div>
<div class="t m" style="left:417.54px;top:249.25px;font-size:4.183px"><span style="color:#d8a030">if</span> add_gcs_to_active_model(epsg_code):</div>
<div class="t" style="left:399.3px;top:254.58px;font-size:4.0px;height:4.0px;color:#6f9cc0;font-weight:normal;font-family:'Liberation Mono';transform:translateX(-100%);">50</div>
<div class="t m" style="left:427.58px;top:254.59px;font-size:4.183px"><span style="color:#d8a030">print</span>(<span style="color:#3a9a3a">f&quot;GCS EPSG:{epsg_code} added successfully.&quot;</span>)</div>
<div class="t" style="left:399.3px;top:259.92px;font-size:4.0px;height:4.0px;color:#6f9cc0;font-weight:normal;font-family:'Liberation Mono';transform:translateX(-100%);">51</div>
<div class="t m" style="left:417.54px;top:259.93px;font-size:4.183px"><span style="color:#d8a030">else</span>:</div>
<div class="t" style="left:399.3px;top:265.26px;font-size:4.0px;height:4.0px;color:#6f9cc0;font-weight:normal;font-family:'Liberation Mono';transform:translateX(-100%);">52</div>
<div class="t m" style="left:427.58px;top:265.27px;font-size:4.183px"><span style="color:#d8a030">print</span>(<span style="color:#3a9a3a">f&quot;Failed to add GCS EPSG:{epsg_code}.&quot;</span>)</div>
<div class="t" style="left:399.3px;top:270.60px;font-size:4.0px;height:4.0px;color:#6f9cc0;font-weight:normal;font-family:'Liberation Mono';transform:translateX(-100%);">53</div>
<div class="t" style="left:399.3px;top:275.94px;font-size:4.0px;height:4.0px;color:#6f9cc0;font-weight:normal;font-family:'Liberation Mono';transform:translateX(-100%);">54</div>
<div class="t m" style="left:417.54px;top:275.95px;font-size:4.183px"><span style="color:#d8a030">print</span>(<span style="color:#3a9a3a">&quot;Script end...&quot;</span>)</div>
</div>
<svg class="a" style="left:448.5px;top:214px" width="6" height="16" viewBox="0 0 6 16"><path d="M0.5,1 H5.5 M3,1 V15 M0.5,15 H5.5" stroke="#fff" stroke-width="2.2"/><path d="M0.8,1 H5.2 M3,1 V15 M0.8,15 H5.2" stroke="#111" stroke-width="1.2"/></svg>
<div class="a" style="left:580px;top:81.5px;width:4.5px;height:199px;background:#f8f4f8;"></div>
<div class="t" style="left:580.8px;top:83.90px;font-size:2.6px;height:2.6px;color:#666;font-weight:normal;">▲</div>
<div class="t" style="left:580.8px;top:276.00px;font-size:2.6px;height:2.6px;color:#666;font-weight:normal;">▼</div>
<div class="a" style="left:581px;top:146px;width:3px;height:127px;background:#d2ccd4;"></div>
<div class="a" style="left:386px;top:279.8px;width:198.5px;height:8.5px;background:#f7f2f8;"></div>
<div class="a" style="left:386.2px;top:280.5px;width:20px;height:6.5px;background:#fff;border:0.5px solid #ddd"></div>
<div class="t" style="left:387.5px;top:282.50px;font-size:4px;height:4px;color:#333;font-weight:normal;">100%</div>
<div class="t" style="left:402.5px;top:283.10px;font-size:2.6px;height:2.6px;color:#555;font-weight:normal;">▾</div>
<div class="t" style="left:410px;top:283.00px;font-size:3px;height:3px;color:#555;font-weight:normal;">◂</div>
<div class="t" style="left:575px;top:283.00px;font-size:3px;height:3px;color:#555;font-weight:normal;">▸</div>
<div class="a" style="left:415px;top:282.3px;width:85px;height:3px;background:#cdc6cf;"></div>
<div class="a" style="left:385.5px;top:289px;width:200px;height:8.5px;background:#ebe5ec;"></div>
<div class="t" style="left:388px;top:291.80px;font-size:4.2px;height:4.2px;color:#555;font-weight:normal;">Terminal</div>
<div class="a" style="left:385.5px;top:297.5px;width:200px;height:93px;background:#fff;"></div>
<div class="t m" style="left:389px;top:300.10px;font-size:4.1px;color:#333">Script start...</div>
<div class="t m" style="left:389px;top:305.10px;font-size:4.1px;color:#333">Successfully added GCS EPSG:6439 to the active DGN model.</div>
<div class="t m" style="left:389px;top:310.10px;font-size:4.1px;color:#333">GCS EPSG:6439 added successfully.</div>
<div class="t m" style="left:389px;top:315.10px;font-size:4.1px;color:#333">Script end...</div>
<div class="a" style="left:585.3px;top:81px;width:2px;height:311px;background:#f0eaf2;"></div>
<div class="a" style="left:587px;top:81px;width:136px;height:311px;background:#fdf8fd;"></div>
<div class="a" style="left:587px;top:81px;width:136px;height:15px;background:#f6f0f8;"></div>
<div class="t" style="left:589px;top:86.55px;font-size:6.7px;height:6.7px;color:#111;font-weight:bold;">Python Assistant</div>
<div class="t" style="left:652px;top:87.70px;font-size:4.6px;height:4.6px;color:#3a5ad8;font-weight:normal;text-decoration:underline">New chat</div>
<div class="a" style="left:713px;top:85.8px;width:6.5px;height:6.5px;border-radius:50%;border:0.7px solid #333"></div>
<div class="a" style="left:715.4px;top:88.2px;width:1.8px;height:1.8px;border-radius:50%;background:#222"></div>
<div class="a" style="left:596.5px;top:96px;width:126.2px;height:14.5px;background:#1ba2f2;"></div>
<div class="t" style="left:599px;top:98.98px;font-size:4.25px;height:4.25px;color:#fff;font-weight:normal;">Add a Geographic Coordinate System (GCS) to the active DGN</div>
<div class="t" style="left:599px;top:104.58px;font-size:4.25px;height:4.25px;color:#fff;font-weight:normal;">model for the EPSG code 6439.</div>
<div class="a" style="left:587px;top:110.5px;width:136px;height:281.5px;background:#fff;"></div>
<div class="t" style="left:588.5px;top:113.90px;font-size:4.4px;height:4.4px;color:#333;font-weight:normal;">Here is your script:</div>
<div class="a" style="left:591.5px;top:117.5px;width:122px;height:125.5px;background:#fdf9fd;border:0.5px solid #eee6ee"></div>
<div class="a" style="left:596px;top:118px;width:0.5px;height:120px;background:#ebe3eb;"></div>
<div class="a" style="left:0;top:0;width:900px;height:480px;clip-path:inset(118px 194px 241px 592px)">
<div class="t m" style="left:603.50px;top:120.31px;font-size:4.583px"><span style="color:#2a2aa0;font-weight:bold">if</span><span style="color:#444"> </span><span style="color:#444">newGCS</span><span style="color:#444"> </span><span style="color:#2a2aa0;font-weight:bold">is</span><span style="color:#444"> </span><span style="color:#2a2aa0;font-weight:bold">None</span><span style="color:#444">:</span></div>
<div class="t m" style="left:614.50px;top:125.48px;font-size:4.583px"><span style="color:#2a2aa0;font-weight:bold">print</span><span style="color:#444">(</span><span style="color:#8a8a8a;font-weight:normal">&quot;Failed to create GCS.&quot;</span><span style="color:#444">)</span></div>
<div class="t m" style="left:614.50px;top:130.65px;font-size:4.583px"><span style="color:#2a2aa0;font-weight:bold">return</span><span style="color:#444"> </span><span style="color:#2a2aa0;font-weight:bold">False</span></div>
<div class="t m" style="left:603.50px;top:140.99px;font-size:4.583px"><span style="color:#3c8c3c"># Add the GCS to the active model</span></div>
<div class="t m" style="left:603.50px;top:146.16px;font-size:4.583px"><span style="color:#444">newGCS</span><span style="color:#444">.</span><span style="color:#444">ToModel</span><span style="color:#444">(</span><span style="color:#444">ACTIVEMODEL</span><span style="color:#444">,</span><span style="color:#444"> </span><span style="color:#2a2aa0;font-weight:bold">True</span><span style="color:#444">,</span><span style="color:#444"> </span><span style="color:#2a2aa0;font-weight:bold">True</span><span style="color:#444">,</span><span style="color:#444"> </span><span style="color:#2a2aa0;font-weight:bold">True</span><span style="color:#444">,</span><span style="color:#444"> </span><span style="color:#2a2aa0;font-weight:bold">True</span><span style="color:#444">)</span></div>
<div class="t m" style="left:603.50px;top:151.33px;font-size:4.583px"><span style="color:#2a2aa0;font-weight:bold">print</span><span style="color:#444">(</span><span style="color:#8a8a8a;font-weight:normal">f&quot;Successfully added GCS EPSG:{epsg_code} to the active DGN model.&quot;</span><span style="color:#444">)</span></div>
<div class="t m" style="left:603.50px;top:156.50px;font-size:4.583px"><span style="color:#2a2aa0;font-weight:bold">return</span><span style="color:#444"> </span><span style="color:#2a2aa0;font-weight:bold">True</span></div>
<div class="t m" style="left:592.50px;top:166.84px;font-size:4.583px"><span style="color:#3c8c3c"># Main</span></div>
<div class="t m" style="left:592.50px;top:172.01px;font-size:4.583px"><span style="color:#2a2aa0;font-weight:bold">if</span><span style="color:#444"> </span><span style="color:#444">__name__</span><span style="color:#444"> </span><span style="color:#444">=</span><span style="color:#444">=</span><span style="color:#444"> </span><span style="color:#8a8a8a;font-weight:normal">&quot;__main__&quot;</span><span style="color:#444">:</span></div>
<div class="t m" style="left:603.50px;top:177.18px;font-size:4.583px"><span style="color:#2a2aa0;font-weight:bold">print</span><span style="color:#444">(</span><span style="color:#8a8a8a;font-weight:normal">&quot;Script start...&quot;</span><span style="color:#444">)</span></div>
<div class="t m" style="left:603.50px;top:187.52px;font-size:4.583px"><span style="color:#3c8c3c"># EPSG code for the GCS to add</span></div>
<div class="t m" style="left:603.50px;top:192.69px;font-size:4.583px"><span style="color:#444">epsg_code</span><span style="color:#444"> </span><span style="color:#444">=</span><span style="color:#444"> </span><span style="color:#444">6439</span></div>
<div class="t m" style="left:603.50px;top:203.03px;font-size:4.583px"><span style="color:#3c8c3c"># Add the GCS to the active DGN model</span></div>
<div class="t m" style="left:603.50px;top:208.20px;font-size:4.583px"><span style="color:#2a2aa0;font-weight:bold">if</span><span style="color:#444"> </span><span style="color:#444">add_gcs_to_active_model</span><span style="color:#444">(</span><span style="color:#444">epsg_code</span><span style="color:#444">)</span><span style="color:#444">:</span></div>
<div class="t m" style="left:614.50px;top:213.37px;font-size:4.583px"><span style="color:#2a2aa0;font-weight:bold">print</span><span style="color:#444">(</span><span style="color:#8a8a8a;font-weight:normal">f&quot;GCS EPSG:{epsg_code} added successfully.&quot;</span><span style="color:#444">)</span></div>
<div class="t m" style="left:603.50px;top:218.54px;font-size:4.583px"><span style="color:#2a2aa0;font-weight:bold">else</span><span style="color:#444">:</span></div>
<div class="t m" style="left:614.50px;top:223.71px;font-size:4.583px"><span style="color:#2a2aa0;font-weight:bold">print</span><span style="color:#444">(</span><span style="color:#8a8a8a;font-weight:normal">f&quot;Failed to add GCS EPSG:{epsg_code}.&quot;</span><span style="color:#444">)</span></div>
<div class="t m" style="left:603.50px;top:234.05px;font-size:4.583px"><span style="color:#2a2aa0;font-weight:bold">print</span><span style="color:#444">(</span><span style="color:#8a8a8a;font-weight:normal">&quot;Script end...&quot;</span><span style="color:#444">)</span></div>
</div>
<div class="a" style="left:709.5px;top:118px;width:4px;height:122px;background:#faf6fa;"></div>
<div class="t" style="left:710.2px;top:121.60px;font-size:2.6px;height:2.6px;color:#777;font-weight:normal;">▲</div>
<div class="t" style="left:710.2px;top:236.90px;font-size:2.6px;height:2.6px;color:#aaa;font-weight:normal;">▼</div>
<div class="a" style="left:592px;top:238px;width:117px;height:4px;background:#faf6fa;"></div>
<div class="t" style="left:593px;top:239.20px;font-size:3px;height:3px;color:#555;font-weight:normal;">◂</div>
<div class="t" style="left:702px;top:239.20px;font-size:3px;height:3px;color:#555;font-weight:normal;">▸</div>
<div class="a" style="left:598px;top:238.8px;width:35px;height:2.5px;background:#cfc8d0;"></div>
<div class="a" style="left:592px;top:246px;width:28.5px;height:9px;background:#f2ecf4;border:0.5px solid #e4dce6;border-radius:1px"></div>
<div class="t" style="left:601.5px;top:249.10px;font-size:4.4px;height:4.4px;color:#333;font-weight:normal;">Copy</div>
<div class="t" style="left:592px;top:261.50px;font-size:4.6px;height:4.6px;color:#222;font-weight:normal;font-family:'Liberation Mono';transform:translateY(1.5px)">Explanation:</div>
<div class="t" style="left:600.5px;top:271.75px;font-size:4.5px;height:4.5px;color:#333;font-weight:normal;font-family:'Liberation Mono';transform:translateY(1.5px)">1.</div>
<div class="t m" style="left:607.7px;top:273.25px;width:105px;font-size:4.5px;color:#3a3a3a;white-space:normal;text-align:justify;text-align-last:justify;"><b style="color:#111">Import Libraries:</b> The necessary</div>
<div class="t m" style="left:607.7px;top:278.45px;width:105px;font-size:4.5px;color:#3a3a3a;white-space:normal;text-align:justify;text-align-last:justify;">MicroStation Python API libraries are</div>
<div class="t m" style="left:607.7px;top:283.65px;width:105px;font-size:4.5px;color:#3a3a3a;white-space:normal;">imported.</div>
<div class="t" style="left:600.5px;top:287.35px;font-size:4.5px;height:4.5px;color:#333;font-weight:normal;font-family:'Liberation Mono';transform:translateY(1.5px)">2.</div>
<div class="t m" style="left:607.7px;top:288.85px;width:105px;font-size:4.5px;color:#3a3a3a;white-space:normal;text-align:justify;text-align-last:justify;"><b style="color:#111">Get Active DGN Model:</b> The active DGN</div>
<div class="t m" style="left:607.7px;top:294.05px;width:105px;font-size:4.5px;color:#3a3a3a;white-space:normal;text-align:justify;text-align-last:justify;">model is retrieved using</div>
<div class="t m" style="left:607.7px;top:299.25px;width:105px;font-size:4.5px;color:#3a3a3a;white-space:normal;">ISessionMgr.ActiveDgnModelRef.</div>
<div class="t" style="left:600.5px;top:302.95px;font-size:4.5px;height:4.5px;color:#333;font-weight:normal;font-family:'Liberation Mono';transform:translateY(1.5px)">3.</div>
<div class="t m" style="left:607.7px;top:304.45px;width:105px;font-size:4.5px;color:#3a3a3a;white-space:normal;text-align:justify;text-align-last:justify;"><b style="color:#111">Check Existing GCS:</b> The script checks</div>
<div class="t m" style="left:607.7px;top:309.65px;width:105px;font-size:4.5px;color:#3a3a3a;white-space:normal;text-align:justify;text-align-last:justify;">if a GCS is already present in the</div>
<div class="t m" style="left:607.7px;top:314.85px;width:105px;font-size:4.5px;color:#3a3a3a;white-space:normal;">active model using DgnGCS.FromModel.</div>
<div class="t" style="left:600.5px;top:318.55px;font-size:4.5px;height:4.5px;color:#333;font-weight:normal;font-family:'Liberation Mono';transform:translateY(1.5px)">4.</div>
<div class="t m" style="left:607.7px;top:320.05px;width:105px;font-size:4.5px;color:#3a3a3a;white-space:normal;text-align:justify;text-align-last:justify;"><b style="color:#111">Create New GCS:</b> If no GCS is present,</div>
<div class="t m" style="left:607.7px;top:325.25px;width:105px;font-size:4.5px;color:#3a3a3a;white-space:normal;text-align:justify;text-align-last:justify;">a new GCS definition is created using</div>
<div class="t m" style="left:607.7px;top:330.45px;width:105px;font-size:4.5px;color:#3a3a3a;white-space:normal;">the specified EPSG code.</div>
<div class="t" style="left:600.5px;top:334.15px;font-size:4.5px;height:4.5px;color:#333;font-weight:normal;font-family:'Liberation Mono';transform:translateY(1.5px)">5.</div>
<div class="t m" style="left:607.7px;top:335.65px;width:105px;font-size:4.5px;color:#3a3a3a;white-space:normal;text-align:justify;text-align-last:justify;"><b style="color:#111">Add GCS to Model:</b> The new GCS is added</div>
<div class="t m" style="left:607.7px;top:340.85px;width:105px;font-size:4.5px;color:#3a3a3a;white-space:normal;">to the active model using ToModel.</div>
<div class="t" style="left:600.5px;top:344.55px;font-size:4.5px;height:4.5px;color:#333;font-weight:normal;font-family:'Liberation Mono';transform:translateY(1.5px)">6.</div>
<div class="t m" style="left:607.7px;top:346.05px;width:105px;font-size:4.5px;color:#3a3a3a;white-space:normal;text-align:justify;text-align-last:justify;"><b style="color:#111">Print Success Message:</b> A success</div>
<div class="t m" style="left:607.7px;top:351.25px;width:105px;font-size:4.5px;color:#3a3a3a;white-space:normal;text-align:justify;text-align-last:justify;">message is printed if the GCS is added</div>
<div class="a" style="left:718.5px;top:111px;width:4px;height:245px;background:#fbf7fb;"></div>
<div class="t" style="left:718.8px;top:350.40px;font-size:2.6px;height:2.6px;color:#555;font-weight:normal;">▼</div>
<div class="a" style="left:719.2px;top:222px;width:2.6px;height:107px;background:#d6d0d8;"></div>
<div class="a" style="left:587px;top:355.5px;width:136px;height:0.6px;background:#e8e0ea;"></div>
<div class="a" style="left:587px;top:356px;width:136px;height:36px;background:#fff;"></div>
<div class="t" style="left:589px;top:358.90px;font-size:4.2px;height:4.2px;color:#888;font-weight:normal;font-style:italic">Ask Copilot</div>
<div class="a" style="left:587px;top:376px;width:136px;height:0.5px;background:#ece6ee;"></div>
<div class="a" style="left:694.5px;top:381.4px;width:28px;height:9.2px;background:#f2ecf4;border:0.5px solid #e4dce6"></div>
<div class="t" style="left:703px;top:384.65px;font-size:4.5px;height:4.5px;color:#444;font-weight:normal;">Send</div>
<div class="a" style="left:746.7px;top:66.1px;width:95.3px;height:41.6px;background:#fcf6fc;border-radius:2.5px;border:0.5px solid #ddd4de"></div>
<svg class="a" style="left:748.5px;top:68.5px" width="7" height="6" viewBox="0 0 7 6"><path d="M0.5,5.5 L3,0.5 6.5,5.5Z" fill="none" stroke="#888" stroke-width="0.7"/><rect x="1" y="3" width="2.5" height="2.5" fill="#999"/></svg>
<div class="t" style="left:757px;top:70.30px;font-size:4.4px;height:4.4px;color:#888;font-weight:normal;">Element Selection</div>
<div class="a" style="left:800.5px;top:71.3px;width:3.5px;height:0.5px;background:#aaa;"></div>
<div class="a" style="left:816px;top:69.5px;width:3.5px;height:3.5px;border:0.5px solid #ccc;border-radius:0.6px"></div>
<svg class="a" style="left:831.5px;top:69.1px" width="5" height="5" viewBox="0 0 5 5"><path d="M0.5,0.5 L4.5,4.5 M4.5,0.5 L0.5,4.5" stroke="#999" stroke-width="0.55"/></svg>
<div class="a" style="left:750.5px;top:80.2px;width:39px;height:0.6px;background:#e0dae2;"></div>
<div class="a" style="left:750.5px;top:80.8px;width:39px;height:8.4px;background:#f6f0f6;"></div>
<div class="a" style="left:750.5px;top:94.8px;width:39px;height:0.6px;background:#e0dae2;"></div>
<div class="a" style="left:750.5px;top:95.39999999999999px;width:39px;height:8.4px;background:#f6f0f6;"></div>
<div class="a" style="left:751px;top:81.3px;width:7.5px;height:7.8px;background:#a8cdf0;border:0.5px solid #7ab0e0"></div>
<div class="a" style="left:752.7px;top:83px;width:4px;height:4px;border:0.6px solid #3a80d0;border-radius:50%"></div>
<div class="a" style="left:761px;top:83.3px;width:5px;height:3.5px;border:0.6px solid #8ab8e0"></div>
<div class="a" style="left:768.5px;top:83px;width:5px;height:4px;border:0.6px dashed #8ab8e0;border-radius:1px"></div>
<div class="a" style="left:775.5px;top:82.8px;width:4.5px;height:4.5px;border:0.6px solid #8ab8e0;border-radius:50%"></div>
<svg class="a" style="left:782.5px;top:82.5px" width="6" height="6" viewBox="0 0 6 6"><path d="M0.5,5.5 L5.5,0.5" stroke="#8ab8e0" stroke-width="0.7"/></svg>
<svg class="a" style="left:796.5px;top:80.5px" width="9" height="9" viewBox="0 0 9 9"><rect x="0.5" y="0.5" width="5.5" height="6" fill="#2a6ac0"/><rect x="1.5" y="1.5" width="3.5" height="4" fill="#4aa0e8"/><circle cx="6.5" cy="6.5" r="2.2" fill="#d83030"/><path d="M5.5,6.5 L6.3,7.3 7.6,5.8" stroke="#fff" stroke-width="0.5" fill="none"/></svg>
<div class="a" style="left:751px;top:95.8px;width:7.5px;height:7.8px;background:#a8cdf0;border:0.5px solid #7ab0e0"></div>
<svg class="a" style="left:752.5px;top:96.8px" width="5" height="6" viewBox="0 0 5 6"><path d="M0.5,0.5 L4.5,3.5 2.5,3.8 3.5,5.5 2.7,5.8 1.8,4.2 0.5,5Z" fill="#222"/></svg>
<div class="a" style="left:762.3px;top:97.2px;width:1.3px;height:5px;background:#2a7ad8;"></div>
<div class="a" style="left:760.5px;top:99px;width:5px;height:1.3px;background:#2a7ad8;"></div>
<div class="a" style="left:768px;top:99.2px;width:4.5px;height:1.3px;background:#2a7ad8;"></div>
<svg class="a" style="left:774px;top:97px" width="5.5" height="5.5" viewBox="0 0 5.5 5.5"><rect x="0.3" y="0.3" width="4.9" height="4.9" fill="#fff" stroke="#2a7ad8" stroke-width="0.5"/><path d="M0.3,5.2 L5.2,0.3 V5.2Z" fill="#2a7ad8"/></svg>
<div class="a" style="left:781.5px;top:96.8px;width:5.5px;height:5.5px;border:0.6px solid #7aa8d8;border-radius:50%"></div>
<svg class="a" style="left:796.5px;top:95.5px" width="9" height="9" viewBox="0 0 9 9"><rect x="0.5" y="0.5" width="6" height="6.5" fill="#888"/><rect x="1.3" y="1.3" width="4.5" height="5" fill="#bbb"/><path d="M5,4.5 L8.5,8" stroke="#333" stroke-width="0.8"/></svg>
<svg class="a" style="left:834.5px;top:101.5px" width="4" height="3" viewBox="0 0 4 3"><path d="M0.3,0.5 H3.7 L2,2.6Z" fill="#111"/></svg>
<div class="a" style="left:739px;top:123.1px;width:119.9px;height:66.9px;background:#fcf6fc;border-radius:2.5px;border:0.5px solid #ddd4de"></div>
<div class="a" style="left:741.3px;top:125.8px;width:5px;height:5px;border-radius:50%;background:conic-gradient(#3a9a40 0 30%,#2a70d0 0 70%,#3a9a40 0)"></div>
<div class="t" style="left:749px;top:127.00px;font-size:4.4px;height:4.4px;color:#444;font-weight:normal;">Geographic Coordinate System</div>
<div class="a" style="left:818px;top:128.2px;width:3.5px;height:0.5px;background:#444;"></div>
<div class="a" style="left:833.5px;top:126.4px;width:3.5px;height:3.5px;border:0.5px solid #ccc;border-radius:0.6px"></div>
<svg class="a" style="left:848.3px;top:125.60000000000001px" width="5.4" height="5.4" viewBox="0 0 5.4 5.4"><path d="M0.5,0.5 L4.9,4.9 M4.9,0.5 L0.5,4.9" stroke="#444" stroke-width="0.55"/></svg>
<div class="a" style="left:740.5px;top:135.5px;width:8px;height:5px;border-radius:2.5px;background:#e0dce0;border:0.5px solid #ccc"></div>
<svg class="a" style="left:750px;top:133px" width="9" height="10" viewBox="0 0 9 10"><circle cx="4.5" cy="4.5" r="3.8" fill="#2a90d8"/><path d="M2,3 C3,2 5,4 7,3 M2,6 C4,5 5,7 7,6" stroke="#3aa040" stroke-width="1"/><path d="M1,7 C3,9.5 6,9.5 8.5,7.5" stroke="#2a70c0" stroke-width="0.8" fill="none"/></svg>
<svg class="a" style="left:762.5px;top:133px" width="7" height="9" viewBox="0 0 7 9"><path d="M3.5,0.5 L6.5,3 4.5,4.5 3.5,7 2.5,4.5 0.5,3Z" fill="#b8b4b8"/><path d="M3.5,6 L1,8.8" stroke="#aaa" stroke-width="0.6"/></svg>
<svg class="a" style="left:770px;top:132.5px" width="9" height="10" viewBox="0 0 9 10"><rect x="0.5" y="4" width="5" height="5" fill="#3a8ad8"/><circle cx="6" cy="3" r="2.6" fill="#3aa040"/><rect x="2" y="5.5" width="2" height="2" fill="#fff"/></svg>
<svg class="a" style="left:781.5px;top:133px" width="9" height="9" viewBox="0 0 9 9"><rect x="0.5" y="3" width="6" height="5.5" fill="#eee" stroke="#ccc" stroke-width="0.4"/><path d="M3,5 L8.5,0.5" stroke="#ccc" stroke-width="0.7"/></svg>
<svg class="a" style="left:790.5px;top:132.5px" width="9" height="10" viewBox="0 0 9 10"><rect x="0.5" y="5" width="7" height="4.5" fill="#e8b030"/><path d="M2,5 V3 C2,1 6.5,1 6.5,3" fill="none" stroke="#ccc" stroke-width="0.8"/></svg>
<svg class="a" style="left:800.5px;top:133px" width="8" height="9" viewBox="0 0 8 9"><rect x="0.5" y="0.5" width="6" height="7.5" fill="#bfe0f8" stroke="#2a80c8" stroke-width="0.6"/><rect x="2" y="2.5" width="5.5" height="6" fill="#e8d060" stroke="#2a80c8" stroke-width="0.5"/></svg>
<svg class="a" style="left:812.5px;top:133px" width="7" height="9" viewBox="0 0 7 9"><ellipse cx="3.5" cy="5.5" rx="2.8" ry="3" fill="#c8c4c8"/><path d="M1,0.5 L6,3 M6,0.5 L1,3" stroke="#aaa" stroke-width="0.6"/></svg>
<div class="a" style="left:739.5px;top:144.5px;width:119px;height:0.5px;background:#e6dfe8;"></div>
<div class="t" style="left:761px;top:150.20px;font-size:4.4px;height:4.4px;color:#222;font-weight:bold;">Current Geographic Coordinate System</div>
<div class="t" style="left:771.5px;top:158.00px;font-size:4.4px;height:4.4px;color:#444;font-weight:normal;transform:translateX(-100%);">Name:</div>
<div class="t" style="left:771.5px;top:166.10px;font-size:4.4px;height:4.4px;color:#444;font-weight:normal;transform:translateX(-100%);">Description:</div>
<div class="t" style="left:771.5px;top:174.10px;font-size:4.4px;height:4.4px;color:#444;font-weight:normal;transform:translateX(-100%);">Source:</div>
<div class="t" style="left:771.5px;top:182.10px;font-size:4.4px;height:4.4px;color:#444;font-weight:normal;transform:translateX(-100%);">Vertical Datum:</div>
<div class="t" style="left:775px;top:158.00px;font-size:4.4px;height:4.4px;color:#444;font-weight:normal;">&lt;None&gt;</div>
</body></html>
